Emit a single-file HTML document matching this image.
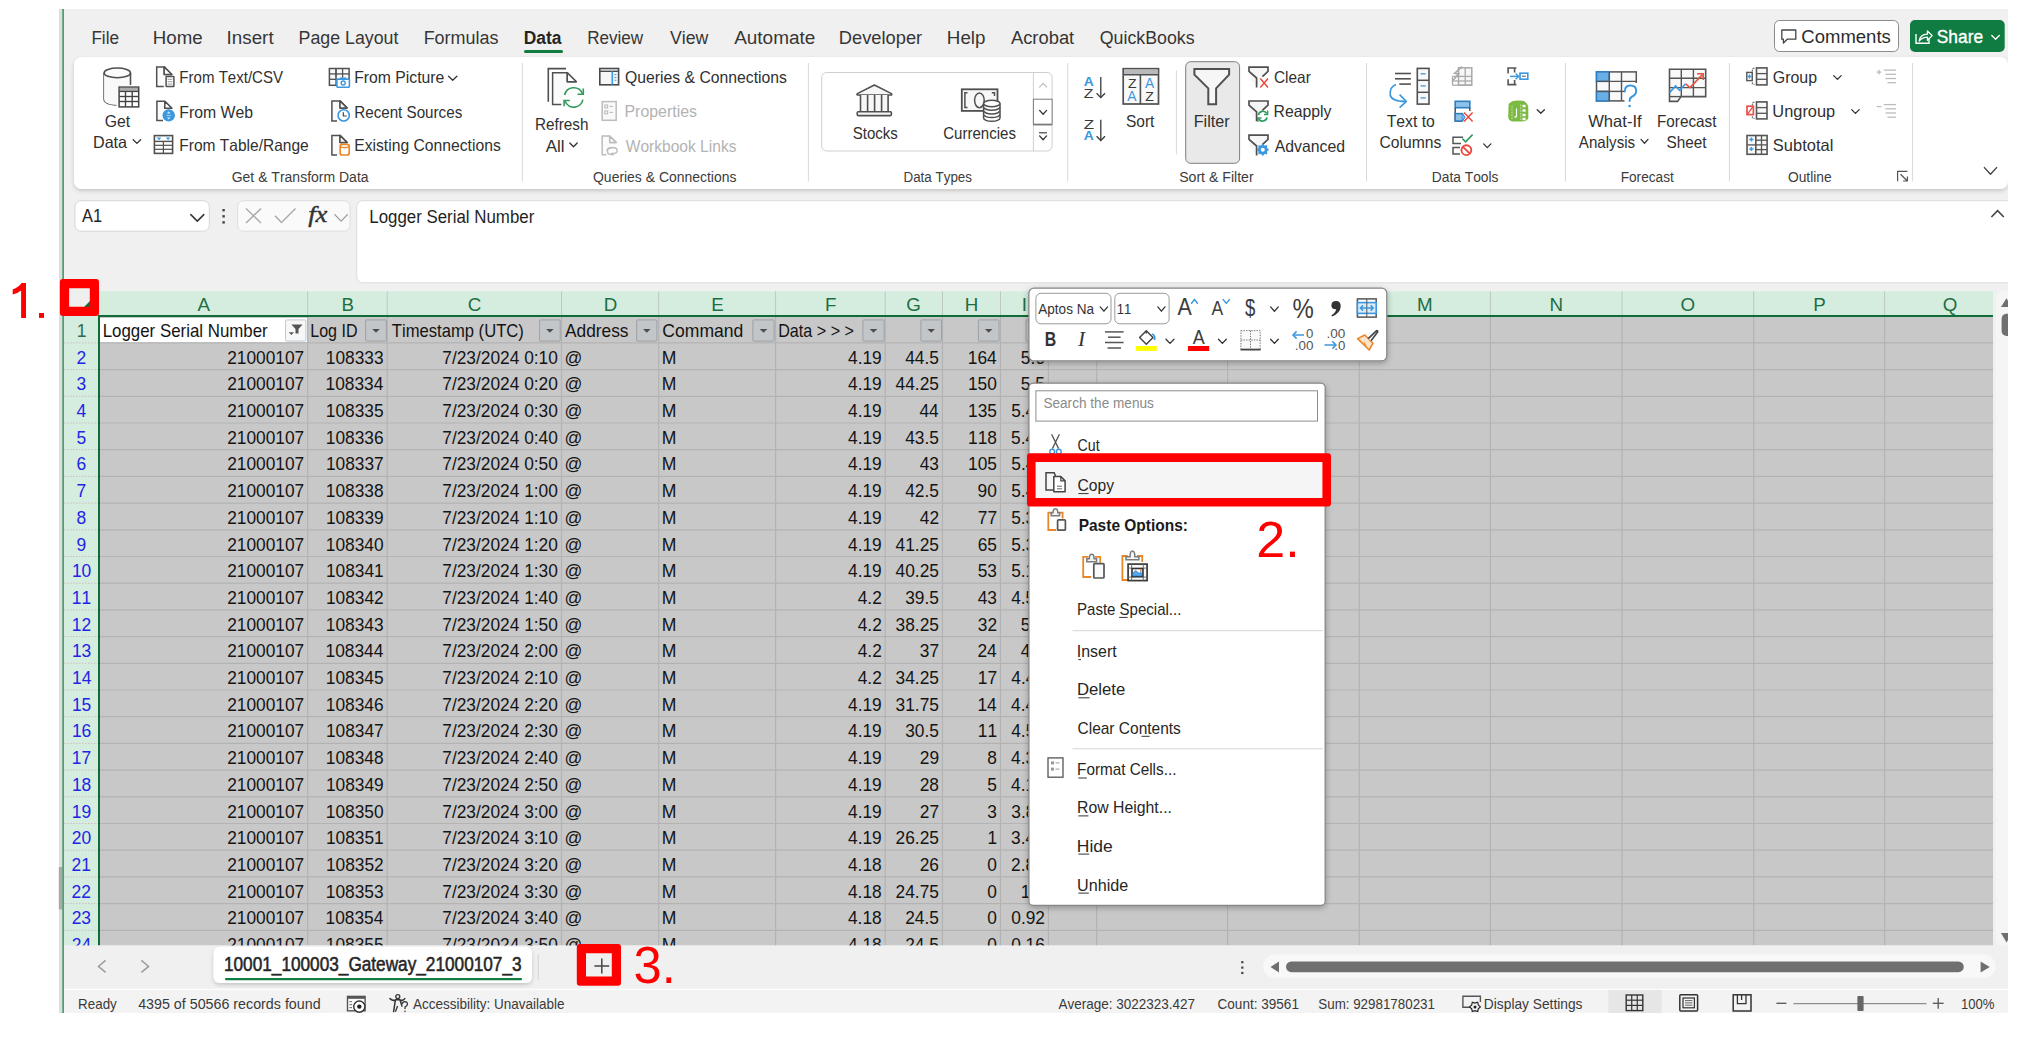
<!DOCTYPE html>
<html><head><meta charset="utf-8"><title>Excel</title>
<style>
html,body{margin:0;padding:0;background:#ffffff;overflow:hidden;width:2036px;height:1037px}
svg{display:block;position:absolute;left:0;top:0}
text{font-family:"Liberation Sans",sans-serif;font-kerning:none;font-variant-ligatures:none;white-space:pre}
</style></head><body>
<svg width="2036" height="1037" viewBox="0 0 2036 1037">
<defs>
<filter id="sh" x="-10%" y="-10%" width="120%" height="130%"><feGaussianBlur in="SourceAlpha" stdDeviation="3"/><feOffset dy="2"/><feComponentTransfer><feFuncA type="linear" slope="0.28"/></feComponentTransfer><feMerge><feMergeNode/><feMergeNode in="SourceGraphic"/></feMerge></filter>
<filter id="sh2" x="-5%" y="-5%" width="110%" height="130%"><feGaussianBlur in="SourceAlpha" stdDeviation="2"/><feOffset dy="2"/><feComponentTransfer><feFuncA type="linear" slope="0.18"/></feComponentTransfer><feMerge><feMergeNode/><feMergeNode in="SourceGraphic"/></feMerge></filter>
<clipPath id="win"><rect x="64" y="9" width="1944" height="1004"/></clipPath>
</defs>
<rect x="59" y="9" width="3.2" height="1004" fill="#dedede"/>
<rect x="58.8" y="867" width="3.6" height="42.4" fill="#a9a9a9"/>
<rect x="62.2" y="9" width="1.8" height="1004" fill="#4f9f72"/>
<rect x="64" y="9" width="1944" height="1004" fill="#f0f0f0"/>
<g clip-path="url(#win)">
<text x="91.39" y="43.8" textLength="27.67" lengthAdjust="spacingAndGlyphs" style="font-size:19.19px" fill="#363636">File</text>
<text x="152.77" y="43.8" textLength="49.86" lengthAdjust="spacingAndGlyphs" style="font-size:19.19px" fill="#363636">Home</text>
<text x="226.56" y="43.8" textLength="47.07" lengthAdjust="spacingAndGlyphs" style="font-size:19.19px" fill="#363636">Insert</text>
<text x="298.54" y="43.8" textLength="99.89" lengthAdjust="spacingAndGlyphs" style="font-size:19.19px" fill="#363636">Page Layout</text>
<text x="423.63" y="43.8" textLength="74.82" lengthAdjust="spacingAndGlyphs" style="font-size:19.19px" fill="#363636">Formulas</text>
<text x="587.2" y="43.8" textLength="55.96" lengthAdjust="spacingAndGlyphs" style="font-size:19.19px" fill="#363636">Review</text>
<text x="670.02" y="43.8" textLength="38.33" lengthAdjust="spacingAndGlyphs" style="font-size:19.19px" fill="#363636">View</text>
<text x="734.16" y="43.8" textLength="81.18" lengthAdjust="spacingAndGlyphs" style="font-size:19.19px" fill="#363636">Automate</text>
<text x="838.8" y="43.8" textLength="83.4" lengthAdjust="spacingAndGlyphs" style="font-size:19.19px" fill="#363636">Developer</text>
<text x="946.86" y="43.8" textLength="38.63" lengthAdjust="spacingAndGlyphs" style="font-size:19.19px" fill="#363636">Help</text>
<text x="1010.96" y="43.8" textLength="63.27" lengthAdjust="spacingAndGlyphs" style="font-size:19.19px" fill="#363636">Acrobat</text>
<text x="1099.76" y="43.8" textLength="94.88" lengthAdjust="spacingAndGlyphs" style="font-size:19.19px" fill="#363636">QuickBooks</text>
<text x="523.63" y="43.8" textLength="37.75" lengthAdjust="spacingAndGlyphs" style="font-size:19.19px;font-weight:bold" fill="#242424">Data</text>
<rect x="524" y="50" width="39" height="3" rx="1.5" fill="#107c41"/>
<rect x="1774.5" y="20.5" width="124" height="31" rx="5" fill="#ffffff" stroke="#8a8a8a" stroke-width="1"/>
<text x="1801.36" y="42.5" textLength="89.41" lengthAdjust="spacingAndGlyphs" style="font-size:18.17px" fill="#2b2b2b">Comments</text>
<rect x="1910" y="20" width="94.7" height="32" rx="5" fill="#107c41"/>
<text x="1936.81" y="42.5" textLength="46.26" lengthAdjust="spacingAndGlyphs" style="font-size:18.17px" fill="#ffffff" stroke="#ffffff" stroke-width="0.35">Share</text>
<rect x="74" y="57" width="1934" height="132" rx="8" fill="#ffffff" filter="url(#sh2)"/>
<rect x="821.7" y="72.5" width="230.4" height="78.5" rx="5" fill="#ffffff" stroke="#cfcfcf" stroke-width="1"/>
<rect x="1185.7" y="61.7" width="53.9" height="101.6" rx="5" fill="#e9e9e9" stroke="#7d7d7d" stroke-width="1"/>
<line x1="522.3" y1="63" x2="522.3" y2="181.5" stroke="#d9d9d9" stroke-width="1"/>
<line x1="808.4" y1="63" x2="808.4" y2="181.5" stroke="#d9d9d9" stroke-width="1"/>
<line x1="1067.7" y1="63" x2="1067.7" y2="181.5" stroke="#d9d9d9" stroke-width="1"/>
<line x1="1366.5" y1="63" x2="1366.5" y2="181.5" stroke="#d9d9d9" stroke-width="1"/>
<line x1="1565.5" y1="63" x2="1565.5" y2="181.5" stroke="#d9d9d9" stroke-width="1"/>
<line x1="1729.4" y1="63" x2="1729.4" y2="181.5" stroke="#d9d9d9" stroke-width="1"/>
<line x1="1912.6" y1="63" x2="1912.6" y2="181.5" stroke="#d9d9d9" stroke-width="1"/>
<line x1="1176.4" y1="70.5" x2="1176.4" y2="154.5" stroke="#d9d9d9" stroke-width="1"/>
<text x="231.7" y="181.5" textLength="136.9" lengthAdjust="spacingAndGlyphs" style="font-size:13.95px" fill="#3c3c3c">Get &amp; Transform Data</text>
<text x="593.04" y="181.5" textLength="143.36" lengthAdjust="spacingAndGlyphs" style="font-size:13.95px" fill="#3c3c3c">Queries &amp; Connections</text>
<text x="903.5" y="181.5" textLength="68.48" lengthAdjust="spacingAndGlyphs" style="font-size:13.95px" fill="#3c3c3c">Data Types</text>
<text x="1179.16" y="181.5" textLength="74.47" lengthAdjust="spacingAndGlyphs" style="font-size:13.95px" fill="#3c3c3c">Sort &amp; Filter</text>
<text x="1431.77" y="181.5" textLength="66.73" lengthAdjust="spacingAndGlyphs" style="font-size:13.95px" fill="#3c3c3c">Data Tools</text>
<text x="1620.68" y="181.5" textLength="53.12" lengthAdjust="spacingAndGlyphs" style="font-size:13.95px" fill="#3c3c3c">Forecast</text>
<text x="1787.95" y="181.5" textLength="43.67" lengthAdjust="spacingAndGlyphs" style="font-size:13.95px" fill="#3c3c3c">Outline</text>
<text x="104.71" y="126.6" textLength="25.41" lengthAdjust="spacingAndGlyphs" style="font-size:16.28px" fill="#303030">Get</text>
<text x="92.97" y="147.9" textLength="34.13" lengthAdjust="spacingAndGlyphs" style="font-size:16.28px" fill="#303030">Data</text>
<text x="179.37" y="83.3" textLength="103.7" lengthAdjust="spacingAndGlyphs" style="font-size:16.28px" fill="#303030">From Text/CSV</text>
<text x="179.3" y="117.6" textLength="73.76" lengthAdjust="spacingAndGlyphs" style="font-size:16.28px" fill="#303030">From Web</text>
<text x="179.33" y="151" textLength="129.36" lengthAdjust="spacingAndGlyphs" style="font-size:16.28px" fill="#303030">From Table/Range</text>
<text x="354.21" y="83.3" textLength="90.09" lengthAdjust="spacingAndGlyphs" style="font-size:16.28px" fill="#303030">From Picture</text>
<text x="354.25" y="117.6" textLength="107.99" lengthAdjust="spacingAndGlyphs" style="font-size:16.28px" fill="#303030">Recent Sources</text>
<text x="354.21" y="151" textLength="146.55" lengthAdjust="spacingAndGlyphs" style="font-size:16.28px" fill="#303030">Existing Connections</text>
<text x="534.95" y="129.8" textLength="53.55" lengthAdjust="spacingAndGlyphs" style="font-size:16.28px" fill="#303030">Refresh</text>
<text x="545.77" y="151.5" textLength="18.87" lengthAdjust="spacingAndGlyphs" style="font-size:16.28px" fill="#303030">All</text>
<text x="625.05" y="83" textLength="161.91" lengthAdjust="spacingAndGlyphs" style="font-size:16.28px" fill="#303030">Queries &amp; Connections</text>
<text x="624.49" y="117" textLength="72.58" lengthAdjust="spacingAndGlyphs" style="font-size:16.28px" fill="#b3b3b3">Properties</text>
<text x="625.73" y="151.5" textLength="110.73" lengthAdjust="spacingAndGlyphs" style="font-size:16.28px" fill="#b3b3b3">Workbook Links</text>
<text x="852.72" y="139" textLength="45.13" lengthAdjust="spacingAndGlyphs" style="font-size:16.28px" fill="#303030">Stocks</text>
<text x="943.24" y="139" textLength="72.71" lengthAdjust="spacingAndGlyphs" style="font-size:16.28px" fill="#303030">Currencies</text>
<text x="1126" y="126.9" textLength="28.42" lengthAdjust="spacingAndGlyphs" style="font-size:16.28px" fill="#303030">Sort</text>
<text x="1193.67" y="126.9" textLength="36" lengthAdjust="spacingAndGlyphs" style="font-size:16.28px" fill="#303030">Filter</text>
<text x="1274.02" y="83" textLength="36.74" lengthAdjust="spacingAndGlyphs" style="font-size:16.28px" fill="#303030">Clear</text>
<text x="1273.5" y="116.9" textLength="58.03" lengthAdjust="spacingAndGlyphs" style="font-size:16.28px" fill="#303030">Reapply</text>
<text x="1274.77" y="151.5" textLength="70.25" lengthAdjust="spacingAndGlyphs" style="font-size:16.28px" fill="#303030">Advanced</text>
<text x="1386.65" y="126.5" textLength="48.22" lengthAdjust="spacingAndGlyphs" style="font-size:16.28px" fill="#303030">Text to</text>
<text x="1379.4" y="147.9" textLength="61.86" lengthAdjust="spacingAndGlyphs" style="font-size:16.28px" fill="#303030">Columns</text>
<text x="1588.23" y="126.5" textLength="53.45" lengthAdjust="spacingAndGlyphs" style="font-size:16.28px" fill="#303030">What-If</text>
<text x="1578.87" y="147.9" textLength="56.28" lengthAdjust="spacingAndGlyphs" style="font-size:16.28px" fill="#303030">Analysis</text>
<text x="1657.05" y="126.5" textLength="59.36" lengthAdjust="spacingAndGlyphs" style="font-size:16.28px" fill="#303030">Forecast</text>
<text x="1666.6" y="147.9" textLength="40.01" lengthAdjust="spacingAndGlyphs" style="font-size:16.28px" fill="#303030">Sheet</text>
<text x="1772.8" y="82.8" textLength="44.27" lengthAdjust="spacingAndGlyphs" style="font-size:16.28px" fill="#303030">Group</text>
<text x="1772.34" y="116.6" textLength="62.85" lengthAdjust="spacingAndGlyphs" style="font-size:16.28px" fill="#303030">Ungroup</text>
<text x="1772.85" y="151.2" textLength="60.45" lengthAdjust="spacingAndGlyphs" style="font-size:16.28px" fill="#303030">Subtotal</text>
<path d="M104.1 73 L104.1 99 Q104.1 104.3 116.6 105" fill="none" stroke="#505050" stroke-width="1.6"/>
<path d="M104.1 73 L104.1 99 Q104.1 104.5 117.5 104.9 L118.3 86.3 L130.5 86.3 L130.5 73 Z" fill="#f9f9f9"/>
<ellipse cx="117.3" cy="72.9" rx="13.2" ry="4.9" fill="#fbfbfb" stroke="#505050" stroke-width="1.6"/>
<line x1="130.5" y1="73" x2="130.5" y2="85" stroke="#505050" stroke-width="1.6"/>
<rect x="119.1" y="87.1" width="19.6" height="19.8" fill="#ffffff" stroke="#444444" stroke-width="1.5"/>
<rect x="119.8" y="87.8" width="18.2" height="2.9" fill="#ababab"/>
<line x1="119.1" y1="91.4" x2="138.7" y2="91.4" stroke="#444444" stroke-width="1.4"/>
<line x1="119.1" y1="96.5" x2="138.7" y2="96.5" stroke="#444444" stroke-width="1.4"/>
<line x1="119.1" y1="101.5" x2="138.7" y2="101.5" stroke="#444444" stroke-width="1.4"/>
<line x1="125.5" y1="91.4" x2="125.5" y2="106.9" stroke="#444444" stroke-width="1.4"/>
<line x1="132.2" y1="91.4" x2="132.2" y2="106.9" stroke="#444444" stroke-width="1.4"/>
<path d="M133.2 139.8 L136.9 143.4 L140.6 139.8" fill="none" stroke="#333333" stroke-width="1.3" stroke-linecap="round" stroke-linejoin="round"/>
<path d="M156.7 66.9 L164.2 66.9 L171.8 74.5 L171.8 86.6 L156.7 86.6 Z" fill="#fbfbfb"/>
<path d="M163.8 86.6 L156.7 86.6 L156.7 66.9 L164.2 66.9" fill="none" stroke="#505050" stroke-width="1.5"/>
<path d="M164.2 66.9 L164.2 74.5 L171.8 74.5 L164.2 66.9" fill="none" stroke="#505050" stroke-width="1.5" stroke-linejoin="round"/>
<path d="M164.2 66.9 L164.2 74.5 L171.8 74.5 Z" fill="#ffffff" stroke="#505050" stroke-width="1.5" stroke-linejoin="round"/>
<rect x="166.1" y="76.5" width="7.8" height="10.1" rx="0.5" fill="#ffffff" stroke="#505050" stroke-width="1.5"/>
<line x1="167.6" y1="79.3" x2="172.4" y2="79.3" stroke="#9a9a9a" stroke-width="1"/>
<line x1="167.6" y1="81.7" x2="172.4" y2="81.7" stroke="#9a9a9a" stroke-width="1"/>
<line x1="167.6" y1="84.1" x2="172.4" y2="84.1" stroke="#9a9a9a" stroke-width="1"/>
<path d="M156.9 101.3 L164.8 101.3 L171.8 108.3 L171.8 120.6 L156.9 120.6 Z" fill="#fbfbfb"/>
<path d="M163 120.6 L156.9 120.6 L156.9 101.3 L164.8 101.3" fill="none" stroke="#505050" stroke-width="1.5"/>
<path d="M164.8 101.3 L164.8 108.3 L171.8 108.3 L164.8 101.3" fill="none" stroke="#505050" stroke-width="1.5" stroke-linejoin="round"/>
<path d="M164.8 101.3 L164.8 108.3 L171.8 108.3 Z" fill="#ffffff" stroke="#505050" stroke-width="1.5" stroke-linejoin="round"/>
<circle cx="168.7" cy="115.4" r="6.2" fill="#3b97de"/>
<path d="M166.9 113.4 L168.7 111.3 L170.5 113.4 Z M166.9 117.4 L168.7 119.5 L170.5 117.4 Z" fill="#ffffff" opacity="0.8"/>
<line x1="166.5" y1="115.4" x2="170.9" y2="115.4" stroke="#ffffff" stroke-width="0.8" opacity="0.7"/>
<rect x="154.4" y="135.6" width="18.2" height="17.8" fill="#ffffff" stroke="#505050" stroke-width="1.6"/>
<line x1="154.4" y1="141.4" x2="172.6" y2="141.4" stroke="#505050" stroke-width="1.4"/>
<line x1="154.4" y1="145.3" x2="172.6" y2="145.3" stroke="#505050" stroke-width="1.2"/>
<line x1="154.4" y1="149.3" x2="172.6" y2="149.3" stroke="#505050" stroke-width="1.2"/>
<line x1="163.4" y1="141.4" x2="163.4" y2="153.4" stroke="#505050" stroke-width="1.2"/>
<path d="M156.7 137.6 L161.3 137.6 L159 140.3 Z M165.8 137.6 L170.4 137.6 L168.1 140.3 Z" fill="#3b97de"/>
<rect x="329.4" y="68.5" width="19.7" height="16.8" fill="#fbfbfb" stroke="#505050" stroke-width="1.5"/>
<line x1="329.4" y1="73.9" x2="349.1" y2="73.9" stroke="#505050" stroke-width="1.3"/>
<line x1="329.4" y1="79.3" x2="349.1" y2="79.3" stroke="#505050" stroke-width="1.3"/>
<line x1="336" y1="68.5" x2="336" y2="77.6" stroke="#505050" stroke-width="1.3"/>
<line x1="342.6" y1="68.5" x2="342.6" y2="77.6" stroke="#505050" stroke-width="1.3"/>
<line x1="336" y1="68.5" x2="336" y2="85.3" stroke="#505050" stroke-width="1.3"/>
<rect x="336.9" y="79.2" width="12.5" height="8" rx="0.6" fill="#ffffff" stroke="#3b97de" stroke-width="1.6"/>
<rect x="340" y="77.4" width="6.2" height="2" fill="#3b97de"/>
<circle cx="343.2" cy="83" r="2" fill="none" stroke="#3b97de" stroke-width="1.4"/>
<path d="M448.5 76.3 L452.7 80.2 L456.9 76.3" fill="none" stroke="#333333" stroke-width="1.3" stroke-linecap="round" stroke-linejoin="round"/>
<path d="M331.9 100.9 L340 100.9 L347 107.9 L347 121 L331.9 121 Z" fill="#fbfbfb"/>
<path d="M337 121 L331.9 121 L331.9 100.9 L340 100.9" fill="none" stroke="#505050" stroke-width="1.5"/>
<path d="M340 100.9 L340 107.9 L347 107.9 L340 100.9" fill="none" stroke="#505050" stroke-width="1.5" stroke-linejoin="round"/>
<path d="M340 100.9 L340 107.9 L347 107.9 Z" fill="#ffffff" stroke="#505050" stroke-width="1.5" stroke-linejoin="round"/>
<circle cx="343.7" cy="115.4" r="5.6" fill="#ffffff" stroke="#3b97de" stroke-width="1.6"/>
<path d="M343.3 112.2 L343.3 116 L346.6 116" fill="none" stroke="#444444" stroke-width="1.2"/>
<path d="M331.9 135.4 L340 135.4 L347 142.4 L347 155 L331.9 155 Z" fill="#fbfbfb"/>
<path d="M337 155 L331.9 155 L331.9 135.4 L340 135.4" fill="none" stroke="#505050" stroke-width="1.5"/>
<path d="M340 135.4 L340 142.4 L347 142.4 L340 135.4" fill="none" stroke="#505050" stroke-width="1.5" stroke-linejoin="round"/>
<path d="M340 135.4 L340 142.4 L347 142.4 Z" fill="#ffffff" stroke="#505050" stroke-width="1.5" stroke-linejoin="round"/>
<rect x="340.2" y="144.4" width="9" height="10.6" rx="2" fill="#ffffff" stroke="#e8862a" stroke-width="1.7"/>
<path d="M340.2 146.5 Q344.7 149 349.2 146.5" fill="none" stroke="#e8862a" stroke-width="1.4"/>
<path d="M548.3 101.7 L548.3 68.6 L566 68.6" fill="none" stroke="#505050" stroke-width="1.6"/>
<path d="M552.6 72.8 L567.3 72.8 L576.3 81.8 L576.3 104.5 L552.6 104.5 Z" fill="#fbfbfb"/>
<path d="M561.3 104.5 L552.6 104.5 L552.6 72.8 L567.3 72.8" fill="none" stroke="#505050" stroke-width="1.5"/>
<path d="M567.3 72.8 L567.3 81.8 L576.3 81.8 L567.3 72.8" fill="none" stroke="#505050" stroke-width="1.5" stroke-linejoin="round"/>
<path d="M567.3 72.8 L567.3 81.8 L576.3 81.8 Z" fill="#ffffff" stroke="#505050" stroke-width="1.5" stroke-linejoin="round"/>
<circle cx="573.7" cy="97.4" r="10.5" fill="#ffffff"/>
<path d="M564.6 95 A9.3 9.3 0 0 1 582.3 93.5" fill="none" stroke="#2e9a5c" stroke-width="1.6"/>
<path d="M582.9 99.6 A9.3 9.3 0 0 1 565.1 101.3" fill="none" stroke="#2e9a5c" stroke-width="1.6"/>
<path d="M583.3 88.5 L583.3 94.2 L577.6 94.2" fill="none" stroke="#2e9a5c" stroke-width="1.6"/>
<path d="M564.1 106.2 L564.1 100.5 L569.8 100.5" fill="none" stroke="#2e9a5c" stroke-width="1.6"/>
<path d="M569.8 143 L573.5 146.8 L577.2 143" fill="none" stroke="#333333" stroke-width="1.3" stroke-linecap="round" stroke-linejoin="round"/>
<rect x="599.8" y="68.5" width="18.8" height="16.3" fill="#f7f7f7" stroke="#4a4a4a" stroke-width="1.6"/>
<line x1="599.8" y1="71.3" x2="618.6" y2="71.3" stroke="#4a4a4a" stroke-width="1.4"/>
<line x1="612.3" y1="71.3" x2="612.3" y2="84.8" stroke="#3b97de" stroke-width="1.6"/>
<line x1="614.4" y1="74.6" x2="616.4" y2="74.6" stroke="#3b97de" stroke-width="1"/>
<line x1="614.4" y1="77.4" x2="616.4" y2="77.4" stroke="#3b97de" stroke-width="1"/>
<line x1="614.4" y1="80.2" x2="616.4" y2="80.2" stroke="#3b97de" stroke-width="1"/>
<rect x="602.2" y="101.6" width="14" height="18.7" fill="#f9f9f9" stroke="#bdbdbd" stroke-width="1.5"/>
<rect x="604.8" y="105" width="2.8" height="2.8" fill="none" stroke="#bdbdbd" stroke-width="1.1"/>
<rect x="604.8" y="111" width="2.8" height="2.8" fill="none" stroke="#bdbdbd" stroke-width="1.1"/>
<line x1="609.5" y1="106.4" x2="613" y2="106.4" stroke="#bdbdbd" stroke-width="1.1"/>
<line x1="609.5" y1="112.4" x2="613" y2="112.4" stroke="#bdbdbd" stroke-width="1.1"/>
<path d="M602.2 136.1 L609.7 136.1 L616.2 142.6 L616.2 154.8 L602.2 154.8 Z" fill="#fbfbfb"/>
<path d="M606.5 154.8 L602.2 154.8 L602.2 136.1 L609.7 136.1" fill="none" stroke="#bdbdbd" stroke-width="1.5"/>
<path d="M609.7 136.1 L609.7 142.6 L616.2 142.6 L609.7 136.1" fill="none" stroke="#bdbdbd" stroke-width="1.5" stroke-linejoin="round"/>
<path d="M609.7 136.1 L609.7 142.6 L616.2 142.6 Z" fill="#ffffff" stroke="#bdbdbd" stroke-width="1.5" stroke-linejoin="round"/>
<path d="M607 151 Q607 147.8 611.5 147.8 L613.8 147.8 Q617.2 147.8 617.2 150.6 Q617.2 153.4 613.8 153.4 L611 153.4" fill="#ffffff" stroke="#bdbdbd" stroke-width="1.4"/>
<path d="M611 148 Q607.5 148.2 607.5 151.2 Q607.5 154.6 611.5 154.6 L614 154.6" fill="none" stroke="#bdbdbd" stroke-width="1.4"/>
<line x1="1033.4" y1="72.5" x2="1033.4" y2="151" stroke="#cfcfcf" stroke-width="1"/>
<rect x="1033.4" y="99.2" width="18.7" height="25" fill="#ffffff" stroke="#7a7a7a" stroke-width="1"/>
<line x1="1033.4" y1="124.7" x2="1052.1" y2="124.7" stroke="#7a7a7a" stroke-width="1.5"/>
<path d="M1039.6 87 L1043.1 83.3 L1046.6 87" fill="none" stroke="#c4c4c4" stroke-width="1.2" stroke-linecap="round" stroke-linejoin="round"/>
<path d="M1039.6 110.4 L1043.1 114.2 L1046.6 110.4" fill="none" stroke="#333333" stroke-width="1.3" stroke-linecap="round" stroke-linejoin="round"/>
<line x1="1039" y1="132.8" x2="1047" y2="132.8" stroke="#444" stroke-width="1.2"/>
<path d="M1039.6 135.9 L1043.1 139.7 L1046.6 135.9" fill="none" stroke="#333333" stroke-width="1.3" stroke-linecap="round" stroke-linejoin="round"/>
<path d="M874.4 85 L891.5 93.6 Q892.2 95 891 95 L857.6 95 Q856.5 95 857.3 93.6 Z" fill="#f6f6f6" stroke="#505050" stroke-width="1.6" stroke-linejoin="round"/>
<rect x="860.5" y="95" width="27.6" height="16.7" fill="#f6f6f6"/>
<line x1="860.5" y1="95" x2="860.5" y2="111.7" stroke="#505050" stroke-width="1.6"/>
<line x1="867.6" y1="95" x2="867.6" y2="111.7" stroke="#505050" stroke-width="1.6"/>
<line x1="874.6" y1="95" x2="874.6" y2="111.7" stroke="#505050" stroke-width="1.6"/>
<line x1="881.6" y1="95" x2="881.6" y2="111.7" stroke="#505050" stroke-width="1.6"/>
<line x1="888.1" y1="95" x2="888.1" y2="111.7" stroke="#505050" stroke-width="1.6"/>
<rect x="857.2" y="111.8" width="34.2" height="3.8" rx="1" fill="#f6f6f6" stroke="#505050" stroke-width="1.6"/>
<rect x="961.8" y="89.3" width="35.7" height="21.6" fill="#f7f7f7" stroke="#505050" stroke-width="1.8"/>
<path d="M967.5 92.8 L964.9 92.8 L964.9 107.4 L967.5 107.4 M991.8 92.8 L994.5 92.8 L994.5 96" fill="none" stroke="#505050" stroke-width="1.5"/>
<ellipse cx="979.4" cy="100.3" rx="4.8" ry="7.4" fill="none" stroke="#505050" stroke-width="1.5"/>
<path d="M983.6 114.6 L983.6 118 A8.2 3.3 0 0 0 1000 118 L1000 114.6" fill="#ffffff" stroke="#505050" stroke-width="1.5"/>
<path d="M983.6 110.9 L983.6 114.3 A8.2 3.3 0 0 0 1000 114.3 L1000 110.9" fill="#ffffff" stroke="#505050" stroke-width="1.5"/>
<path d="M983.6 107.2 L983.6 110.6 A8.2 3.3 0 0 0 1000 110.6 L1000 107.2" fill="#ffffff" stroke="#505050" stroke-width="1.5"/>
<path d="M983.6 103.5 L983.6 106.9 A8.2 3.3 0 0 0 1000 106.9 L1000 103.5" fill="#ffffff" stroke="#505050" stroke-width="1.5"/>
<ellipse cx="991.8" cy="103.5" rx="8.2" ry="3.2" fill="#ffffff" stroke="#505050" stroke-width="1.5"/>
<text x="1083.85" y="86.2" textLength="10.01" lengthAdjust="spacingAndGlyphs" style="font-size:13.23px;font-weight:bold" fill="#3b97de">A</text>
<text x="1083.7" y="97.7" textLength="9.59" lengthAdjust="spacingAndGlyphs" style="font-size:12.5px" fill="#3a3a3a">Z</text>
<text x="1083.66" y="128.8" textLength="10.37" lengthAdjust="spacingAndGlyphs" style="font-size:13.23px" fill="#3a3a3a">Z</text>
<text x="1083.85" y="140.3" textLength="10.01" lengthAdjust="spacingAndGlyphs" style="font-size:12.5px;font-weight:bold" fill="#3b97de">A</text>
<line x1="1100.8" y1="77.1" x2="1100.8" y2="97.6" stroke="#3a3a3a" stroke-width="1.3"/>
<path d="M1096.6 93.3 L1100.8 97.6 L1105 93.3" fill="none" stroke="#3a3a3a" stroke-width="1.3"/>
<line x1="1100.8" y1="119.7" x2="1100.8" y2="140.5" stroke="#3a3a3a" stroke-width="1.3"/>
<path d="M1096.6 136.2 L1100.8 140.5 L1105 136.2" fill="none" stroke="#3a3a3a" stroke-width="1.3"/>
<rect x="1123.2" y="68.7" width="35.3" height="35.3" fill="#f9f9f9" stroke="#505050" stroke-width="1.7"/>
<rect x="1124" y="69.5" width="33.7" height="5" fill="#b9b9b9"/>
<line x1="1123.2" y1="74.8" x2="1158.5" y2="74.8" stroke="#505050" stroke-width="1.4"/>
<line x1="1140.4" y1="74.8" x2="1140.4" y2="104" stroke="#505050" stroke-width="1.6"/>
<text x="1128.05" y="87.8" textLength="8.59" lengthAdjust="spacingAndGlyphs" style="font-size:13.52px" fill="#3a3a3a">Z</text>
<text x="1127.37" y="100.9" textLength="9.25" lengthAdjust="spacingAndGlyphs" style="font-size:14.24px" fill="#3b97de">A</text>
<text x="1145.07" y="87.8" textLength="9.15" lengthAdjust="spacingAndGlyphs" style="font-size:14.24px" fill="#3b97de">A</text>
<text x="1145.35" y="100.9" textLength="8.59" lengthAdjust="spacingAndGlyphs" style="font-size:13.52px" fill="#3a3a3a">Z</text>
<path d="M1194.4 69 L1229.1 69 L1229.1 74.6 L1216.1 88.4 L1216.1 104.2 L1208.3 104.2 L1208.3 88.4 L1194.4 74.6 Z" fill="#f6f6f6" stroke="#505050" stroke-width="2" stroke-linejoin="miter"/>
<path d="M1256.6 87.5 L1249 77.8 L1249 67.2 L1268 67.2 L1268 71.4 L1262 76.8" fill="#f6f6f6"/>
<path d="M1256.6 87.5 L1256.6 78 L1249 71.4 L1249 67.2 L1268 67.2 L1268 71.4 L1262.4 76.6" fill="none" stroke="#505050" stroke-width="1.7" stroke-linejoin="miter"/>
<path d="M1256.6 121.3 L1249 111.6 L1249 101 L1268 101 L1268 105.2 L1262 110.6" fill="#f6f6f6"/>
<path d="M1256.6 121.3 L1256.6 111.8 L1249 105.2 L1249 101 L1268 101 L1268 105.2 L1262.4 110.4" fill="none" stroke="#505050" stroke-width="1.7" stroke-linejoin="miter"/>
<path d="M1256.6 155.5 L1249 145.8 L1249 135.2 L1268 135.2 L1268 139.4 L1262 144.8" fill="#f6f6f6"/>
<path d="M1256.6 155.5 L1256.6 146 L1249 139.4 L1249 135.2 L1268 135.2 L1268 139.4 L1262.4 144.6" fill="none" stroke="#505050" stroke-width="1.7" stroke-linejoin="miter"/>
<path d="M1260.3 78.6 L1268 87.6 M1268 78.6 L1260.3 87.6" fill="none" stroke="#ea4a3d" stroke-width="1.5"/>
<path d="M1258.4 115 A4.6 4.6 0 0 1 1266.8 113.4" fill="none" stroke="#2e9a5c" stroke-width="1.6"/>
<path d="M1267 117.3 A4.6 4.6 0 0 1 1258.6 119" fill="none" stroke="#2e9a5c" stroke-width="1.6"/>
<path d="M1267.6 110.6 L1267.6 114.4 L1264 114.4" fill="none" stroke="#2e9a5c" stroke-width="1.5"/>
<path d="M1257.8 121.8 L1257.8 118 L1261.4 118" fill="none" stroke="#2e9a5c" stroke-width="1.5"/>
<path d="M1269.1 149.7 L1267.05 151.46 L1267.25 154.15 L1264.56 153.95 L1262.8 156 L1261.04 153.95 L1258.35 154.15 L1258.55 151.46 L1256.5 149.7 L1258.55 147.94 L1258.35 145.25 L1261.04 145.45 L1262.8 143.4 L1264.56 145.45 L1267.25 145.25 L1267.05 147.94 Z" fill="#3b97de"/>
<circle cx="1262.8" cy="149.7" r="2" fill="#ffffff"/>
<line x1="1395" y1="73.5" x2="1410.9" y2="73.5" stroke="#505050" stroke-width="1.6"/>
<line x1="1395" y1="78.8" x2="1410.9" y2="78.8" stroke="#505050" stroke-width="1.6"/>
<line x1="1399.3" y1="84.1" x2="1410.9" y2="84.1" stroke="#505050" stroke-width="1.6"/>
<rect x="1417.3" y="68.4" width="11.7" height="35.7" fill="#f9f9f9" stroke="#505050" stroke-width="1.6"/>
<line x1="1417.3" y1="80.3" x2="1429" y2="80.3" stroke="#505050" stroke-width="1.5"/>
<line x1="1417.3" y1="92.3" x2="1429" y2="92.3" stroke="#505050" stroke-width="1.5"/>
<line x1="1420.6" y1="73.8" x2="1425.7" y2="73.8" stroke="#3b97de" stroke-width="1.3"/>
<line x1="1420.6" y1="85.9" x2="1425.7" y2="85.9" stroke="#3b97de" stroke-width="1.3"/>
<line x1="1420.6" y1="97.9" x2="1425.7" y2="97.9" stroke="#3b97de" stroke-width="1.3"/>
<path d="M1396 84.6 Q1389.5 87 1390.2 95 Q1391.5 101.5 1405.5 101.4" fill="none" stroke="#3b97de" stroke-width="1.6"/>
<path d="M1399.6 94.6 L1406.3 101.4 L1399.6 107.6" fill="none" stroke="#3b97de" stroke-width="1.6"/>
<rect x="1458.5" y="67.8" width="13.3" height="17.4" fill="#f7f7f7" stroke="#a9a9a9" stroke-width="1.5"/>
<line x1="1452.5" y1="76.4" x2="1471.8" y2="76.4" stroke="#a9a9a9" stroke-width="1.3"/>
<line x1="1452.5" y1="81" x2="1471.8" y2="81" stroke="#a9a9a9" stroke-width="1.3"/>
<line x1="1452.5" y1="85.2" x2="1471.8" y2="85.2" stroke="#a9a9a9" stroke-width="1.3"/>
<line x1="1465.2" y1="67.8" x2="1465.2" y2="85.2" stroke="#a9a9a9" stroke-width="1.3"/>
<line x1="1452.5" y1="76.4" x2="1452.5" y2="85.2" stroke="#a9a9a9" stroke-width="1.3"/>
<path d="M1462 66.6 L1454.6 73.4 L1458.6 73.8 L1453 80.6" fill="none" stroke="#a9a9a9" stroke-width="1.6"/>
<rect x="1455.2" y="101.3" width="14.6" height="6.4" fill="#8cc1ea" stroke="#2f7fc4" stroke-width="1.6"/>
<path d="M1455.2 107.7 L1455.2 121 L1462 121" fill="none" stroke="#444" stroke-width="1.4"/>
<line x1="1469.8" y1="107.7" x2="1469.8" y2="111" stroke="#444" stroke-width="1.4"/>
<rect x="1455.2" y="113.6" width="7.3" height="7.4" fill="#8cc1ea" stroke="#2f7fc4" stroke-width="1.5"/>
<path d="M1462.5 113.6 L1465 117.3 L1462.5 121" fill="#8cc1ea" stroke="#2f7fc4" stroke-width="1"/>
<path d="M1464 112.6 L1472.6 121.4 M1472.6 112.6 L1464 121.4" fill="none" stroke="#ea4a3d" stroke-width="1.5"/>
<path d="M1463 137.2 L1453 137.2 L1453 143.4 L1461 143.4" fill="none" stroke="#555" stroke-width="1.5"/>
<path d="M1460 147.4 L1453 147.4 L1453 154 L1460 154" fill="none" stroke="#555" stroke-width="1.5"/>
<path d="M1462.4 138.6 L1465.6 141.8 L1472.6 134.6" fill="none" stroke="#2e9a5c" stroke-width="1.6"/>
<circle cx="1466.4" cy="150.2" r="4.9" fill="#ffffff" stroke="#ea4a3d" stroke-width="1.9"/>
<line x1="1463" y1="146.8" x2="1469.8" y2="153.6" stroke="#ea4a3d" stroke-width="1.8"/>
<path d="M1483.7 143.9 L1487.3 147.6 L1490.9 143.9" fill="none" stroke="#333333" stroke-width="1.3" stroke-linecap="round" stroke-linejoin="round"/>
<path d="M1516.4 68 L1508.1 68 L1508.1 73.6 M1508.1 79.2 L1508.1 84.6 L1516.4 84.6 M1514.6 68 L1514.6 72.6 M1514.6 80 L1514.6 84.6" fill="none" stroke="#555" stroke-width="1.6"/>
<line x1="1510" y1="76.4" x2="1518.4" y2="76.4" stroke="#3b97de" stroke-width="1.5"/>
<path d="M1515.6 73.6 L1518.6 76.4 L1515.6 79.2" fill="none" stroke="#3b97de" stroke-width="1.4"/>
<rect x="1520" y="73.2" width="7.8" height="6" fill="#ffffff" stroke="#3b97de" stroke-width="1.6"/>
<line x1="1522" y1="76.2" x2="1525.8" y2="76.2" stroke="#555" stroke-width="1"/>
<path d="M1508.6 104 Q1512 100.4 1518 100.6 L1523 100.8 Q1528.2 102.8 1528.3 108 L1528.3 118.6 Q1527 121.4 1522 121.4 L1513 121.6 Q1508.4 120.6 1508.2 117 Z" fill="#7dba44"/>
<path d="M1512 106 L1512 119 M1520.8 104.5 L1520.8 120" fill="none" stroke="#cde6b4" stroke-width="1" stroke-dasharray="1.6 1.2"/>
<rect x="1522.5" y="104.8" width="3.1" height="2.4" fill="#ffffff"/>
<rect x="1522.5" y="109.3" width="3.1" height="2.4" fill="#ffffff"/>
<rect x="1522.5" y="113.8" width="3.1" height="2.4" fill="#ffffff"/>
<rect x="1522.5" y="117.8" width="3.1" height="2.4" fill="#ffffff"/>
<path d="M1516.5 108.5 L1516.5 116.2 Q1516 117.6 1514.4 116.8" fill="none" stroke="#ffffff" stroke-width="1.2"/>
<path d="M1537.2 109.7 L1540.8 113.2 L1544.4 109.7" fill="none" stroke="#333333" stroke-width="1.3" stroke-linecap="round" stroke-linejoin="round"/>
<rect x="1596.5" y="71.9" width="39.8" height="29" fill="#f9f9f9" stroke="#555" stroke-width="1.5"/>
<rect x="1596.5" y="71.9" width="12.8" height="9.5" fill="#6aaee6" stroke="#2f7fc4" stroke-width="1.5"/>
<rect x="1596.5" y="91.4" width="12.8" height="9.5" fill="#6aaee6" stroke="#2f7fc4" stroke-width="1.5"/>
<line x1="1596.5" y1="81.4" x2="1636.3" y2="81.4" stroke="#555" stroke-width="1.4"/>
<line x1="1596.5" y1="91.4" x2="1624" y2="91.4" stroke="#555" stroke-width="1.4"/>
<line x1="1609.3" y1="71.9" x2="1609.3" y2="100.9" stroke="#555" stroke-width="1.4"/>
<line x1="1621.5" y1="71.9" x2="1621.5" y2="100.9" stroke="#555" stroke-width="1.4"/>
<rect x="1624.5" y="83" width="13.5" height="25" fill="#ffffff"/>
<path d="M1624.8 91.6 Q1624.8 85.6 1630.4 85.6 Q1636.2 85.6 1636.2 91 Q1636.2 94.8 1631.5 97 Q1629.6 98 1629.6 101" fill="none" stroke="#3b97de" stroke-width="2" stroke-linecap="round"/>
<circle cx="1629.6" cy="106" r="1.3" fill="#3b97de"/>
<path d="M1669.5 69.2 L1705.7 69.2 L1705.7 96.6 L1681 96.6 L1677.6 101.4 L1669.5 101.4 Z" fill="#f9f9f9" stroke="#555" stroke-width="1.6"/>
<line x1="1669.5" y1="78.2" x2="1705.7" y2="78.2" stroke="#555" stroke-width="1.4"/>
<line x1="1669.5" y1="87.6" x2="1705.7" y2="87.6" stroke="#555" stroke-width="1.4"/>
<line x1="1669.5" y1="96.6" x2="1681" y2="96.6" stroke="#555" stroke-width="1.4"/>
<line x1="1681.3" y1="69.2" x2="1681.3" y2="96.6" stroke="#555" stroke-width="1.4"/>
<line x1="1693.4" y1="69.2" x2="1693.4" y2="96.6" stroke="#555" stroke-width="1.4"/>
<path d="M1669.8 92.4 L1675.6 86 L1679.6 90.4 L1685.6 83.8" fill="none" stroke="#3b97de" stroke-width="1.6"/>
<path d="M1685.6 83.8 L1690 87.6 L1702.4 74.6" fill="none" stroke="#e8533f" stroke-width="1.6"/>
<path d="M1697 73.8 L1703.2 73.8 L1703.2 80" fill="none" stroke="#e8533f" stroke-width="1.6"/>
<path d="M1641 139.4 L1644.5 143.2 L1648 139.4" fill="none" stroke="#333333" stroke-width="1.3" stroke-linecap="round" stroke-linejoin="round"/>
<path d="M1754.5 68.3 L1752.4 68.3 L1752.4 84.3 L1754.5 84.3" fill="none" stroke="#777" stroke-width="1.2" stroke-dasharray="2 1.2"/>
<rect x="1756.5" y="67.9" width="10.5" height="17" fill="#f9f9f9" stroke="#555" stroke-width="1.6"/>
<line x1="1756.5" y1="73.6" x2="1767" y2="73.6" stroke="#555" stroke-width="1.3"/>
<line x1="1756.5" y1="79.3" x2="1767" y2="79.3" stroke="#555" stroke-width="1.3"/>
<rect x="1746.8" y="72.4" width="5.4" height="8.2" fill="#ffffff" stroke="#555" stroke-width="1.4"/>
<path d="M1749.5 74.4 L1749.5 78.6 M1747.6 76.5 L1751.4 76.5" fill="none" stroke="#3b97de" stroke-width="1.4"/>
<path d="M1754.5 102.3 L1752.4 102.3 L1752.4 118.3 L1754.5 118.3" fill="none" stroke="#777" stroke-width="1.2" stroke-dasharray="2 1.2"/>
<rect x="1756.5" y="101.9" width="10.5" height="17" fill="#f9f9f9" stroke="#555" stroke-width="1.6"/>
<line x1="1756.5" y1="107.6" x2="1767" y2="107.6" stroke="#555" stroke-width="1.3"/>
<line x1="1756.5" y1="113.3" x2="1767" y2="113.3" stroke="#555" stroke-width="1.3"/>
<rect x="1747" y="106.2" width="6.4" height="8.4" fill="#ffffff" stroke="#e8504a" stroke-width="1.7"/>
<line x1="1747.6" y1="114" x2="1752.8" y2="106.8" stroke="#e8504a" stroke-width="1.3"/>
<rect x="1747" y="135.5" width="20.1" height="18.8" fill="#f9f9f9" stroke="#555" stroke-width="1.6"/>
<line x1="1747" y1="144.9" x2="1767.1" y2="144.9" stroke="#555" stroke-width="1.3"/>
<line x1="1755.8" y1="135.5" x2="1755.8" y2="154.3" stroke="#555" stroke-width="1.6"/>
<line x1="1761.5" y1="135.5" x2="1761.5" y2="154.3" stroke="#555" stroke-width="1.3"/>
<line x1="1755.8" y1="140.2" x2="1767.1" y2="140.2" stroke="#555" stroke-width="1.3"/>
<line x1="1755.8" y1="149.6" x2="1767.1" y2="149.6" stroke="#555" stroke-width="1.3"/>
<path d="M1751.4 137.5 L1751.4 141.5 M1749.3 139.5 L1753.5 139.5" fill="none" stroke="#3b97de" stroke-width="1.4"/>
<path d="M1751.4 147 L1751.4 151 M1749.3 149 L1753.5 149" fill="none" stroke="#3b97de" stroke-width="1.4"/>
<path d="M1833.7 75.6 L1837.45 79.4 L1841.2 75.6" fill="none" stroke="#333333" stroke-width="1.3" stroke-linecap="round" stroke-linejoin="round"/>
<path d="M1851.7 109.6 L1855.45 113.4 L1859.2 109.6" fill="none" stroke="#333333" stroke-width="1.3" stroke-linecap="round" stroke-linejoin="round"/>
<line x1="1883.8" y1="70.1" x2="1896" y2="70.1" stroke="#bcbcbc" stroke-width="1.3"/>
<line x1="1885.5" y1="74.3" x2="1896" y2="74.3" stroke="#bcbcbc" stroke-width="1.3"/>
<line x1="1885.5" y1="78.5" x2="1896" y2="78.5" stroke="#bcbcbc" stroke-width="1.3"/>
<line x1="1887.5" y1="82.7" x2="1896" y2="82.7" stroke="#bcbcbc" stroke-width="1.3"/>
<line x1="1876.6" y1="72.1" x2="1881.4" y2="72.1" stroke="#bcbcbc" stroke-width="1.3"/>
<line x1="1879" y1="69.7" x2="1879" y2="74.5" stroke="#bcbcbc" stroke-width="1.3"/>
<line x1="1883.8" y1="104.6" x2="1896" y2="104.6" stroke="#bcbcbc" stroke-width="1.3"/>
<line x1="1885.5" y1="108.8" x2="1896" y2="108.8" stroke="#bcbcbc" stroke-width="1.3"/>
<line x1="1885.5" y1="113" x2="1896" y2="113" stroke="#bcbcbc" stroke-width="1.3"/>
<line x1="1887.5" y1="117.2" x2="1896" y2="117.2" stroke="#bcbcbc" stroke-width="1.3"/>
<line x1="1876.6" y1="106.6" x2="1881.4" y2="106.6" stroke="#bcbcbc" stroke-width="1.3"/>
<path d="M1897.6 181.2 L1897.6 171.4 L1907.4 171.4" fill="none" stroke="#555" stroke-width="1.2"/>
<path d="M1900.5 174.2 L1907.4 181 M1907.4 176.6 L1907.4 181 L1903 181" fill="none" stroke="#555" stroke-width="1.2"/>
<path d="M1984.4 167.6 L1990.5 174.3 L1996.6 167.6" fill="none" stroke="#444444" stroke-width="1.4" stroke-linecap="round" stroke-linejoin="round"/>
<path d="M1781.8 30 L1795.8 30 L1795.8 39.2 L1787.2 39.2 L1783.4 43 L1783.4 39.2 L1781.8 39.2 Z" fill="none" stroke="#444" stroke-width="1.3" stroke-linejoin="round"/>
<path d="M1916 34 L1916 43.2 L1929 43.2 L1929 38.6" fill="none" stroke="#ffffff" stroke-width="1.4"/>
<path d="M1919.2 41 Q1920 34.6 1927.4 34.2 L1927.4 31 L1932.2 35.6 L1927.4 40.2 L1927.4 37.2 Q1922.6 37.2 1919.2 41 Z" fill="none" stroke="#ffffff" stroke-width="1.3" stroke-linejoin="round"/>
<path d="M1991.8 35.4 L1995.55 39.2 L1999.3 35.4" fill="none" stroke="#ffffff" stroke-width="1.4" stroke-linecap="round" stroke-linejoin="round"/>
<rect x="75" y="200.7" width="134.3" height="30.5" rx="6" fill="#ffffff" stroke="#d6d6d6" stroke-width="1"/>
<text x="81.97" y="222.2" textLength="20.03" lengthAdjust="spacingAndGlyphs" style="font-size:18.9px" fill="#242424">A1</text>
<rect x="237.6" y="200.7" width="112.4" height="30.5" rx="6" fill="#fafafa" stroke="#dedede" stroke-width="1"/>
<rect x="356.7" y="200.7" width="1673.3" height="82.1" rx="6" fill="#ffffff" stroke="#dcdcdc" stroke-width="1"/>
<text x="369.32" y="222.7" textLength="164.96" lengthAdjust="spacingAndGlyphs" style="font-size:19.19px" fill="#1f1f1f">Logger Serial Number</text>
<rect x="64" y="291.3" width="1929" height="23.7" fill="#d4eddf"/>
<rect x="64" y="291.3" width="34" height="23.7" fill="#efefef"/>
<line x1="307.7" y1="291.3" x2="307.7" y2="315" stroke="#bcc9c1" stroke-width="1"/>
<line x1="387.2" y1="291.3" x2="387.2" y2="315" stroke="#bcc9c1" stroke-width="1"/>
<line x1="561.5" y1="291.3" x2="561.5" y2="315" stroke="#bcc9c1" stroke-width="1"/>
<line x1="658.7" y1="291.3" x2="658.7" y2="315" stroke="#bcc9c1" stroke-width="1"/>
<line x1="775.6" y1="291.3" x2="775.6" y2="315" stroke="#bcc9c1" stroke-width="1"/>
<line x1="885.2" y1="291.3" x2="885.2" y2="315" stroke="#bcc9c1" stroke-width="1"/>
<line x1="942.5" y1="291.3" x2="942.5" y2="315" stroke="#bcc9c1" stroke-width="1"/>
<line x1="1000.5" y1="291.3" x2="1000.5" y2="315" stroke="#bcc9c1" stroke-width="1"/>
<line x1="1048.4" y1="291.3" x2="1048.4" y2="315" stroke="#bcc9c1" stroke-width="1"/>
<line x1="1096.6" y1="291.3" x2="1096.6" y2="315" stroke="#bcc9c1" stroke-width="1"/>
<line x1="1227.6" y1="291.3" x2="1227.6" y2="315" stroke="#bcc9c1" stroke-width="1"/>
<line x1="1359.3" y1="291.3" x2="1359.3" y2="315" stroke="#bcc9c1" stroke-width="1"/>
<line x1="1490.4" y1="291.3" x2="1490.4" y2="315" stroke="#bcc9c1" stroke-width="1"/>
<line x1="1622" y1="291.3" x2="1622" y2="315" stroke="#bcc9c1" stroke-width="1"/>
<line x1="1753.7" y1="291.3" x2="1753.7" y2="315" stroke="#bcc9c1" stroke-width="1"/>
<line x1="1884.6" y1="291.3" x2="1884.6" y2="315" stroke="#bcc9c1" stroke-width="1"/>
<text x="203.85" y="310.8" style="font-size:18.75px" fill="#1e6e43" text-anchor="middle">A</text>
<text x="347.72" y="310.8" style="font-size:18.75px" fill="#1e6e43" text-anchor="middle">B</text>
<text x="474.47" y="310.8" style="font-size:18.75px" fill="#1e6e43" text-anchor="middle">C</text>
<text x="610.42" y="310.8" style="font-size:18.75px" fill="#1e6e43" text-anchor="middle">D</text>
<text x="717.52" y="310.8" style="font-size:18.75px" fill="#1e6e43" text-anchor="middle">E</text>
<text x="830.79" y="310.8" style="font-size:18.75px" fill="#1e6e43" text-anchor="middle">F</text>
<text x="913.62" y="310.8" style="font-size:18.75px" fill="#1e6e43" text-anchor="middle">G</text>
<text x="971.5" y="310.8" style="font-size:18.75px" fill="#1e6e43" text-anchor="middle">H</text>
<text x="1024.45" y="310.8" style="font-size:18.75px" fill="#1e6e43" text-anchor="middle">I</text>
<text x="1071.95" y="310.8" style="font-size:18.75px" fill="#1e6e43" text-anchor="middle">J</text>
<text x="1162.76" y="310.8" style="font-size:18.75px" fill="#1e6e43" text-anchor="middle">K</text>
<text x="1293.91" y="310.8" style="font-size:18.75px" fill="#1e6e43" text-anchor="middle">L</text>
<text x="1424.85" y="310.8" style="font-size:18.75px" fill="#1e6e43" text-anchor="middle">M</text>
<text x="1556.2" y="310.8" style="font-size:18.75px" fill="#1e6e43" text-anchor="middle">N</text>
<text x="1687.85" y="310.8" style="font-size:18.75px" fill="#1e6e43" text-anchor="middle">O</text>
<text x="1819.42" y="310.8" style="font-size:18.75px" fill="#1e6e43" text-anchor="middle">P</text>
<text x="1950" y="310.8" style="font-size:18.75px" fill="#1e6e43" text-anchor="middle">Q</text>
<rect x="64" y="315" width="34" height="630.5" fill="#d4eddf"/>
<rect x="100" y="317" width="1893" height="628.5" fill="#c8c8c8"/>
<rect x="100" y="318" width="207.2" height="24.4" fill="#ffffff"/>
<line x1="100" y1="342.9" x2="1993" y2="342.9" stroke="#b3b3b3" stroke-width="1.2"/>
<line x1="64" y1="342.9" x2="98" y2="342.9" stroke="#cdbdc2" stroke-width="1" stroke-dasharray="1.5 1.5"/>
<line x1="100" y1="369.6" x2="1993" y2="369.6" stroke="#b3b3b3" stroke-width="1.2"/>
<line x1="64" y1="369.6" x2="98" y2="369.6" stroke="#cdbdc2" stroke-width="1" stroke-dasharray="1.5 1.5"/>
<line x1="100" y1="396.3" x2="1993" y2="396.3" stroke="#b3b3b3" stroke-width="1.2"/>
<line x1="64" y1="396.3" x2="98" y2="396.3" stroke="#cdbdc2" stroke-width="1" stroke-dasharray="1.5 1.5"/>
<line x1="100" y1="423" x2="1993" y2="423" stroke="#b3b3b3" stroke-width="1.2"/>
<line x1="64" y1="423" x2="98" y2="423" stroke="#cdbdc2" stroke-width="1" stroke-dasharray="1.5 1.5"/>
<line x1="100" y1="449.7" x2="1993" y2="449.7" stroke="#b3b3b3" stroke-width="1.2"/>
<line x1="64" y1="449.7" x2="98" y2="449.7" stroke="#cdbdc2" stroke-width="1" stroke-dasharray="1.5 1.5"/>
<line x1="100" y1="476.4" x2="1993" y2="476.4" stroke="#b3b3b3" stroke-width="1.2"/>
<line x1="64" y1="476.4" x2="98" y2="476.4" stroke="#cdbdc2" stroke-width="1" stroke-dasharray="1.5 1.5"/>
<line x1="100" y1="503.1" x2="1993" y2="503.1" stroke="#b3b3b3" stroke-width="1.2"/>
<line x1="64" y1="503.1" x2="98" y2="503.1" stroke="#cdbdc2" stroke-width="1" stroke-dasharray="1.5 1.5"/>
<line x1="100" y1="529.8" x2="1993" y2="529.8" stroke="#b3b3b3" stroke-width="1.2"/>
<line x1="64" y1="529.8" x2="98" y2="529.8" stroke="#cdbdc2" stroke-width="1" stroke-dasharray="1.5 1.5"/>
<line x1="100" y1="556.5" x2="1993" y2="556.5" stroke="#b3b3b3" stroke-width="1.2"/>
<line x1="64" y1="556.5" x2="98" y2="556.5" stroke="#cdbdc2" stroke-width="1" stroke-dasharray="1.5 1.5"/>
<line x1="100" y1="583.2" x2="1993" y2="583.2" stroke="#b3b3b3" stroke-width="1.2"/>
<line x1="64" y1="583.2" x2="98" y2="583.2" stroke="#cdbdc2" stroke-width="1" stroke-dasharray="1.5 1.5"/>
<line x1="100" y1="609.9" x2="1993" y2="609.9" stroke="#b3b3b3" stroke-width="1.2"/>
<line x1="64" y1="609.9" x2="98" y2="609.9" stroke="#cdbdc2" stroke-width="1" stroke-dasharray="1.5 1.5"/>
<line x1="100" y1="636.6" x2="1993" y2="636.6" stroke="#b3b3b3" stroke-width="1.2"/>
<line x1="64" y1="636.6" x2="98" y2="636.6" stroke="#cdbdc2" stroke-width="1" stroke-dasharray="1.5 1.5"/>
<line x1="100" y1="663.3" x2="1993" y2="663.3" stroke="#b3b3b3" stroke-width="1.2"/>
<line x1="64" y1="663.3" x2="98" y2="663.3" stroke="#cdbdc2" stroke-width="1" stroke-dasharray="1.5 1.5"/>
<line x1="100" y1="690" x2="1993" y2="690" stroke="#b3b3b3" stroke-width="1.2"/>
<line x1="64" y1="690" x2="98" y2="690" stroke="#cdbdc2" stroke-width="1" stroke-dasharray="1.5 1.5"/>
<line x1="100" y1="716.7" x2="1993" y2="716.7" stroke="#b3b3b3" stroke-width="1.2"/>
<line x1="64" y1="716.7" x2="98" y2="716.7" stroke="#cdbdc2" stroke-width="1" stroke-dasharray="1.5 1.5"/>
<line x1="100" y1="743.4" x2="1993" y2="743.4" stroke="#b3b3b3" stroke-width="1.2"/>
<line x1="64" y1="743.4" x2="98" y2="743.4" stroke="#cdbdc2" stroke-width="1" stroke-dasharray="1.5 1.5"/>
<line x1="100" y1="770.1" x2="1993" y2="770.1" stroke="#b3b3b3" stroke-width="1.2"/>
<line x1="64" y1="770.1" x2="98" y2="770.1" stroke="#cdbdc2" stroke-width="1" stroke-dasharray="1.5 1.5"/>
<line x1="100" y1="796.8" x2="1993" y2="796.8" stroke="#b3b3b3" stroke-width="1.2"/>
<line x1="64" y1="796.8" x2="98" y2="796.8" stroke="#cdbdc2" stroke-width="1" stroke-dasharray="1.5 1.5"/>
<line x1="100" y1="823.5" x2="1993" y2="823.5" stroke="#b3b3b3" stroke-width="1.2"/>
<line x1="64" y1="823.5" x2="98" y2="823.5" stroke="#cdbdc2" stroke-width="1" stroke-dasharray="1.5 1.5"/>
<line x1="100" y1="850.2" x2="1993" y2="850.2" stroke="#b3b3b3" stroke-width="1.2"/>
<line x1="64" y1="850.2" x2="98" y2="850.2" stroke="#cdbdc2" stroke-width="1" stroke-dasharray="1.5 1.5"/>
<line x1="100" y1="876.9" x2="1993" y2="876.9" stroke="#b3b3b3" stroke-width="1.2"/>
<line x1="64" y1="876.9" x2="98" y2="876.9" stroke="#cdbdc2" stroke-width="1" stroke-dasharray="1.5 1.5"/>
<line x1="100" y1="903.6" x2="1993" y2="903.6" stroke="#b3b3b3" stroke-width="1.2"/>
<line x1="64" y1="903.6" x2="98" y2="903.6" stroke="#cdbdc2" stroke-width="1" stroke-dasharray="1.5 1.5"/>
<line x1="100" y1="930.3" x2="1993" y2="930.3" stroke="#b3b3b3" stroke-width="1.2"/>
<line x1="64" y1="930.3" x2="98" y2="930.3" stroke="#cdbdc2" stroke-width="1" stroke-dasharray="1.5 1.5"/>
<line x1="100" y1="957" x2="1993" y2="957" stroke="#b3b3b3" stroke-width="1.2"/>
<line x1="64" y1="957" x2="98" y2="957" stroke="#cdbdc2" stroke-width="1" stroke-dasharray="1.5 1.5"/>
<line x1="307.7" y1="317" x2="307.7" y2="945.5" stroke="#b3b3b3" stroke-width="1.2"/>
<line x1="387.2" y1="317" x2="387.2" y2="945.5" stroke="#b3b3b3" stroke-width="1.2"/>
<line x1="561.5" y1="317" x2="561.5" y2="945.5" stroke="#b3b3b3" stroke-width="1.2"/>
<line x1="658.7" y1="317" x2="658.7" y2="945.5" stroke="#b3b3b3" stroke-width="1.2"/>
<line x1="775.6" y1="317" x2="775.6" y2="945.5" stroke="#b3b3b3" stroke-width="1.2"/>
<line x1="885.2" y1="317" x2="885.2" y2="945.5" stroke="#b3b3b3" stroke-width="1.2"/>
<line x1="942.5" y1="317" x2="942.5" y2="945.5" stroke="#b3b3b3" stroke-width="1.2"/>
<line x1="1000.5" y1="317" x2="1000.5" y2="945.5" stroke="#b3b3b3" stroke-width="1.2"/>
<line x1="1048.4" y1="317" x2="1048.4" y2="945.5" stroke="#b3b3b3" stroke-width="1.2"/>
<line x1="1096.6" y1="317" x2="1096.6" y2="945.5" stroke="#b3b3b3" stroke-width="1.2"/>
<line x1="1227.6" y1="317" x2="1227.6" y2="945.5" stroke="#b3b3b3" stroke-width="1.2"/>
<line x1="1359.3" y1="317" x2="1359.3" y2="945.5" stroke="#b3b3b3" stroke-width="1.2"/>
<line x1="1490.4" y1="317" x2="1490.4" y2="945.5" stroke="#b3b3b3" stroke-width="1.2"/>
<line x1="1622" y1="317" x2="1622" y2="945.5" stroke="#b3b3b3" stroke-width="1.2"/>
<line x1="1753.7" y1="317" x2="1753.7" y2="945.5" stroke="#b3b3b3" stroke-width="1.2"/>
<line x1="1884.6" y1="317" x2="1884.6" y2="945.5" stroke="#b3b3b3" stroke-width="1.2"/>
<rect x="98" y="315" width="1895" height="2" fill="#0f6b38"/>
<rect x="98" y="315" width="2" height="630.5" fill="#0f6b38"/>
<text x="81.54" y="336.9" style="font-size:17.44px" fill="#2e6a4b" text-anchor="middle">1</text>
<text x="81.3" y="363.6" style="font-size:17.44px" fill="#2323e6" text-anchor="middle">2</text>
<text x="81.25" y="390.3" style="font-size:17.44px" fill="#2323e6" text-anchor="middle">3</text>
<text x="81.24" y="417" style="font-size:17.44px" fill="#2323e6" text-anchor="middle">4</text>
<text x="81.28" y="443.7" style="font-size:17.44px" fill="#2323e6" text-anchor="middle">5</text>
<text x="81.36" y="470.4" style="font-size:17.44px" fill="#2323e6" text-anchor="middle">6</text>
<text x="81.31" y="497.1" style="font-size:17.44px" fill="#2323e6" text-anchor="middle">7</text>
<text x="81.3" y="523.8" style="font-size:17.44px" fill="#2323e6" text-anchor="middle">8</text>
<text x="81.3" y="550.5" style="font-size:17.44px" fill="#2323e6" text-anchor="middle">9</text>
<text x="81.62" y="577.2" style="font-size:17.44px" fill="#2323e6" text-anchor="middle">10</text>
<text x="81.54" y="603.9" style="font-size:17.44px" fill="#2323e6" text-anchor="middle">11</text>
<text x="81.53" y="630.6" style="font-size:17.44px" fill="#2323e6" text-anchor="middle">12</text>
<text x="81.58" y="657.3" style="font-size:17.44px" fill="#2323e6" text-anchor="middle">13</text>
<text x="81.71" y="684" style="font-size:17.44px" fill="#2323e6" text-anchor="middle">14</text>
<text x="81.6" y="710.7" style="font-size:17.44px" fill="#2323e6" text-anchor="middle">15</text>
<text x="81.58" y="737.4" style="font-size:17.44px" fill="#2323e6" text-anchor="middle">16</text>
<text x="81.53" y="764.1" style="font-size:17.44px" fill="#2323e6" text-anchor="middle">17</text>
<text x="81.59" y="790.8" style="font-size:17.44px" fill="#2323e6" text-anchor="middle">18</text>
<text x="81.55" y="817.5" style="font-size:17.44px" fill="#2323e6" text-anchor="middle">19</text>
<text x="81.4" y="844.2" style="font-size:17.44px" fill="#2323e6" text-anchor="middle">20</text>
<text x="81.31" y="870.9" style="font-size:17.44px" fill="#2323e6" text-anchor="middle">21</text>
<text x="81.3" y="897.6" style="font-size:17.44px" fill="#2323e6" text-anchor="middle">22</text>
<text x="81.36" y="924.3" style="font-size:17.44px" fill="#2323e6" text-anchor="middle">23</text>
<text x="81.48" y="951" style="font-size:17.44px" fill="#2323e6" text-anchor="middle">24</text>
<text x="102.72" y="337" textLength="164.96" lengthAdjust="spacingAndGlyphs" style="font-size:17.59px" fill="#141414">Logger Serial Number</text>
<text x="310.28" y="337" textLength="47.28" lengthAdjust="spacingAndGlyphs" style="font-size:17.59px" fill="#141414">Log ID</text>
<text x="391.83" y="337" textLength="132" lengthAdjust="spacingAndGlyphs" style="font-size:17.59px" fill="#141414">Timestamp (UTC)</text>
<text x="564.97" y="337" textLength="63.56" lengthAdjust="spacingAndGlyphs" style="font-size:17.59px" fill="#141414">Address</text>
<text x="662.31" y="337" textLength="81.02" lengthAdjust="spacingAndGlyphs" style="font-size:17.59px" fill="#141414">Command</text>
<text x="778.18" y="337" textLength="75.81" lengthAdjust="spacingAndGlyphs" style="font-size:17.59px" fill="#141414">Data &gt; &gt; &gt;</text>
<text x="227.19" y="363.6" textLength="77.08" lengthAdjust="spacingAndGlyphs" style="font-size:17.59px" fill="#141414">21000107</text>
<text x="325.85" y="363.6" textLength="57.81" lengthAdjust="spacingAndGlyphs" style="font-size:17.59px" fill="#141414">108333</text>
<text x="442.28" y="363.6" textLength="115.6" lengthAdjust="spacingAndGlyphs" style="font-size:17.59px" fill="#141414">7/23/2024 0:10</text>
<text x="564.62" y="363.6" style="font-size:17.59px" fill="#141414">@</text>
<text x="661.76" y="363.6" style="font-size:17.59px" fill="#141414">M</text>
<text x="848" y="363.6" textLength="33.72" lengthAdjust="spacingAndGlyphs" style="font-size:17.59px" fill="#141414">4.19</text>
<text x="905.21" y="363.6" textLength="33.72" lengthAdjust="spacingAndGlyphs" style="font-size:17.59px" fill="#141414">44.5</text>
<text x="967.8" y="363.6" textLength="28.9" lengthAdjust="spacingAndGlyphs" style="font-size:17.59px" fill="#141414">164</text>
<text x="1020.78" y="363.6" textLength="24.08" lengthAdjust="spacingAndGlyphs" style="font-size:17.59px" fill="#141414">5.6</text>
<text x="227.19" y="390.3" textLength="77.08" lengthAdjust="spacingAndGlyphs" style="font-size:17.59px" fill="#141414">21000107</text>
<text x="325.6" y="390.3" textLength="57.81" lengthAdjust="spacingAndGlyphs" style="font-size:17.59px" fill="#141414">108334</text>
<text x="442.28" y="390.3" textLength="115.6" lengthAdjust="spacingAndGlyphs" style="font-size:17.59px" fill="#141414">7/23/2024 0:20</text>
<text x="564.62" y="390.3" style="font-size:17.59px" fill="#141414">@</text>
<text x="661.76" y="390.3" style="font-size:17.59px" fill="#141414">M</text>
<text x="848" y="390.3" textLength="33.72" lengthAdjust="spacingAndGlyphs" style="font-size:17.59px" fill="#141414">4.19</text>
<text x="895.58" y="390.3" textLength="43.35" lengthAdjust="spacingAndGlyphs" style="font-size:17.59px" fill="#141414">44.25</text>
<text x="967.97" y="390.3" textLength="28.9" lengthAdjust="spacingAndGlyphs" style="font-size:17.59px" fill="#141414">150</text>
<text x="1020.75" y="390.3" textLength="24.08" lengthAdjust="spacingAndGlyphs" style="font-size:17.59px" fill="#141414">5.5</text>
<text x="227.19" y="417" textLength="77.08" lengthAdjust="spacingAndGlyphs" style="font-size:17.59px" fill="#141414">21000107</text>
<text x="325.82" y="417" textLength="57.81" lengthAdjust="spacingAndGlyphs" style="font-size:17.59px" fill="#141414">108335</text>
<text x="442.28" y="417" textLength="115.6" lengthAdjust="spacingAndGlyphs" style="font-size:17.59px" fill="#141414">7/23/2024 0:30</text>
<text x="564.62" y="417" style="font-size:17.59px" fill="#141414">@</text>
<text x="661.76" y="417" style="font-size:17.59px" fill="#141414">M</text>
<text x="848" y="417" textLength="33.72" lengthAdjust="spacingAndGlyphs" style="font-size:17.59px" fill="#141414">4.19</text>
<text x="919.44" y="417" textLength="19.27" lengthAdjust="spacingAndGlyphs" style="font-size:17.59px" fill="#141414">44</text>
<text x="968.02" y="417" textLength="28.9" lengthAdjust="spacingAndGlyphs" style="font-size:17.59px" fill="#141414">135</text>
<text x="1011.14" y="417" textLength="33.72" lengthAdjust="spacingAndGlyphs" style="font-size:17.59px" fill="#141414">5.48</text>
<text x="227.19" y="443.7" textLength="77.08" lengthAdjust="spacingAndGlyphs" style="font-size:17.59px" fill="#141414">21000107</text>
<text x="325.85" y="443.7" textLength="57.81" lengthAdjust="spacingAndGlyphs" style="font-size:17.59px" fill="#141414">108336</text>
<text x="442.28" y="443.7" textLength="115.6" lengthAdjust="spacingAndGlyphs" style="font-size:17.59px" fill="#141414">7/23/2024 0:40</text>
<text x="564.62" y="443.7" style="font-size:17.59px" fill="#141414">@</text>
<text x="661.76" y="443.7" style="font-size:17.59px" fill="#141414">M</text>
<text x="848" y="443.7" textLength="33.72" lengthAdjust="spacingAndGlyphs" style="font-size:17.59px" fill="#141414">4.19</text>
<text x="905.21" y="443.7" textLength="33.72" lengthAdjust="spacingAndGlyphs" style="font-size:17.59px" fill="#141414">43.5</text>
<text x="968.05" y="443.7" textLength="28.9" lengthAdjust="spacingAndGlyphs" style="font-size:17.59px" fill="#141414">118</text>
<text x="1011.11" y="443.7" textLength="33.72" lengthAdjust="spacingAndGlyphs" style="font-size:17.59px" fill="#141414">5.45</text>
<text x="227.19" y="470.4" textLength="77.08" lengthAdjust="spacingAndGlyphs" style="font-size:17.59px" fill="#141414">21000107</text>
<text x="325.96" y="470.4" textLength="57.81" lengthAdjust="spacingAndGlyphs" style="font-size:17.59px" fill="#141414">108337</text>
<text x="442.28" y="470.4" textLength="115.6" lengthAdjust="spacingAndGlyphs" style="font-size:17.59px" fill="#141414">7/23/2024 0:50</text>
<text x="564.62" y="470.4" style="font-size:17.59px" fill="#141414">@</text>
<text x="661.76" y="470.4" style="font-size:17.59px" fill="#141414">M</text>
<text x="848" y="470.4" textLength="33.72" lengthAdjust="spacingAndGlyphs" style="font-size:17.59px" fill="#141414">4.19</text>
<text x="919.69" y="470.4" textLength="19.27" lengthAdjust="spacingAndGlyphs" style="font-size:17.59px" fill="#141414">43</text>
<text x="968.02" y="470.4" textLength="28.9" lengthAdjust="spacingAndGlyphs" style="font-size:17.59px" fill="#141414">105</text>
<text x="1011.25" y="470.4" textLength="33.72" lengthAdjust="spacingAndGlyphs" style="font-size:17.59px" fill="#141414">5.42</text>
<text x="227.19" y="497.1" textLength="77.08" lengthAdjust="spacingAndGlyphs" style="font-size:17.59px" fill="#141414">21000107</text>
<text x="325.85" y="497.1" textLength="57.81" lengthAdjust="spacingAndGlyphs" style="font-size:17.59px" fill="#141414">108338</text>
<text x="442.28" y="497.1" textLength="115.6" lengthAdjust="spacingAndGlyphs" style="font-size:17.59px" fill="#141414">7/23/2024 1:00</text>
<text x="564.62" y="497.1" style="font-size:17.59px" fill="#141414">@</text>
<text x="661.76" y="497.1" style="font-size:17.59px" fill="#141414">M</text>
<text x="848" y="497.1" textLength="33.72" lengthAdjust="spacingAndGlyphs" style="font-size:17.59px" fill="#141414">4.19</text>
<text x="905.21" y="497.1" textLength="33.72" lengthAdjust="spacingAndGlyphs" style="font-size:17.59px" fill="#141414">42.5</text>
<text x="977.61" y="497.1" textLength="19.27" lengthAdjust="spacingAndGlyphs" style="font-size:17.59px" fill="#141414">90</text>
<text x="1011.23" y="497.1" textLength="33.72" lengthAdjust="spacingAndGlyphs" style="font-size:17.59px" fill="#141414">5.41</text>
<text x="227.19" y="523.8" textLength="77.08" lengthAdjust="spacingAndGlyphs" style="font-size:17.59px" fill="#141414">21000107</text>
<text x="325.91" y="523.8" textLength="57.81" lengthAdjust="spacingAndGlyphs" style="font-size:17.59px" fill="#141414">108339</text>
<text x="442.28" y="523.8" textLength="115.6" lengthAdjust="spacingAndGlyphs" style="font-size:17.59px" fill="#141414">7/23/2024 1:10</text>
<text x="564.62" y="523.8" style="font-size:17.59px" fill="#141414">@</text>
<text x="661.76" y="523.8" style="font-size:17.59px" fill="#141414">M</text>
<text x="848" y="523.8" textLength="33.72" lengthAdjust="spacingAndGlyphs" style="font-size:17.59px" fill="#141414">4.19</text>
<text x="919.8" y="523.8" textLength="19.27" lengthAdjust="spacingAndGlyphs" style="font-size:17.59px" fill="#141414">42</text>
<text x="977.8" y="523.8" textLength="19.27" lengthAdjust="spacingAndGlyphs" style="font-size:17.59px" fill="#141414">77</text>
<text x="1011.14" y="523.8" textLength="33.72" lengthAdjust="spacingAndGlyphs" style="font-size:17.59px" fill="#141414">5.38</text>
<text x="227.19" y="550.5" textLength="77.08" lengthAdjust="spacingAndGlyphs" style="font-size:17.59px" fill="#141414">21000107</text>
<text x="325.77" y="550.5" textLength="57.81" lengthAdjust="spacingAndGlyphs" style="font-size:17.59px" fill="#141414">108340</text>
<text x="442.28" y="550.5" textLength="115.6" lengthAdjust="spacingAndGlyphs" style="font-size:17.59px" fill="#141414">7/23/2024 1:20</text>
<text x="564.62" y="550.5" style="font-size:17.59px" fill="#141414">@</text>
<text x="661.76" y="550.5" style="font-size:17.59px" fill="#141414">M</text>
<text x="848" y="550.5" textLength="33.72" lengthAdjust="spacingAndGlyphs" style="font-size:17.59px" fill="#141414">4.19</text>
<text x="895.58" y="550.5" textLength="43.35" lengthAdjust="spacingAndGlyphs" style="font-size:17.59px" fill="#141414">41.25</text>
<text x="977.66" y="550.5" textLength="19.27" lengthAdjust="spacingAndGlyphs" style="font-size:17.59px" fill="#141414">65</text>
<text x="1011.25" y="550.5" textLength="33.72" lengthAdjust="spacingAndGlyphs" style="font-size:17.59px" fill="#141414">5.32</text>
<text x="227.19" y="577.2" textLength="77.08" lengthAdjust="spacingAndGlyphs" style="font-size:17.59px" fill="#141414">21000107</text>
<text x="325.94" y="577.2" textLength="57.81" lengthAdjust="spacingAndGlyphs" style="font-size:17.59px" fill="#141414">108341</text>
<text x="442.28" y="577.2" textLength="115.6" lengthAdjust="spacingAndGlyphs" style="font-size:17.59px" fill="#141414">7/23/2024 1:30</text>
<text x="564.62" y="577.2" style="font-size:17.59px" fill="#141414">@</text>
<text x="661.76" y="577.2" style="font-size:17.59px" fill="#141414">M</text>
<text x="848" y="577.2" textLength="33.72" lengthAdjust="spacingAndGlyphs" style="font-size:17.59px" fill="#141414">4.19</text>
<text x="895.58" y="577.2" textLength="43.35" lengthAdjust="spacingAndGlyphs" style="font-size:17.59px" fill="#141414">40.25</text>
<text x="977.69" y="577.2" textLength="19.27" lengthAdjust="spacingAndGlyphs" style="font-size:17.59px" fill="#141414">53</text>
<text x="1011.14" y="577.2" textLength="33.72" lengthAdjust="spacingAndGlyphs" style="font-size:17.59px" fill="#141414">5.18</text>
<text x="227.19" y="603.9" textLength="77.08" lengthAdjust="spacingAndGlyphs" style="font-size:17.59px" fill="#141414">21000107</text>
<text x="325.96" y="603.9" textLength="57.81" lengthAdjust="spacingAndGlyphs" style="font-size:17.59px" fill="#141414">108342</text>
<text x="442.28" y="603.9" textLength="115.6" lengthAdjust="spacingAndGlyphs" style="font-size:17.59px" fill="#141414">7/23/2024 1:40</text>
<text x="564.62" y="603.9" style="font-size:17.59px" fill="#141414">@</text>
<text x="661.76" y="603.9" style="font-size:17.59px" fill="#141414">M</text>
<text x="857.69" y="603.9" textLength="24.08" lengthAdjust="spacingAndGlyphs" style="font-size:17.59px" fill="#141414">4.2</text>
<text x="905.21" y="603.9" textLength="33.72" lengthAdjust="spacingAndGlyphs" style="font-size:17.59px" fill="#141414">39.5</text>
<text x="977.69" y="603.9" textLength="19.27" lengthAdjust="spacingAndGlyphs" style="font-size:17.59px" fill="#141414">43</text>
<text x="1011.14" y="603.9" textLength="33.72" lengthAdjust="spacingAndGlyphs" style="font-size:17.59px" fill="#141414">4.56</text>
<text x="227.19" y="630.6" textLength="77.08" lengthAdjust="spacingAndGlyphs" style="font-size:17.59px" fill="#141414">21000107</text>
<text x="325.85" y="630.6" textLength="57.81" lengthAdjust="spacingAndGlyphs" style="font-size:17.59px" fill="#141414">108343</text>
<text x="442.28" y="630.6" textLength="115.6" lengthAdjust="spacingAndGlyphs" style="font-size:17.59px" fill="#141414">7/23/2024 1:50</text>
<text x="564.62" y="630.6" style="font-size:17.59px" fill="#141414">@</text>
<text x="661.76" y="630.6" style="font-size:17.59px" fill="#141414">M</text>
<text x="857.69" y="630.6" textLength="24.08" lengthAdjust="spacingAndGlyphs" style="font-size:17.59px" fill="#141414">4.2</text>
<text x="895.58" y="630.6" textLength="43.35" lengthAdjust="spacingAndGlyphs" style="font-size:17.59px" fill="#141414">38.25</text>
<text x="977.8" y="630.6" textLength="19.27" lengthAdjust="spacingAndGlyphs" style="font-size:17.59px" fill="#141414">32</text>
<text x="1020.86" y="630.6" textLength="24.08" lengthAdjust="spacingAndGlyphs" style="font-size:17.59px" fill="#141414">5.1</text>
<text x="227.19" y="657.3" textLength="77.08" lengthAdjust="spacingAndGlyphs" style="font-size:17.59px" fill="#141414">21000107</text>
<text x="325.6" y="657.3" textLength="57.81" lengthAdjust="spacingAndGlyphs" style="font-size:17.59px" fill="#141414">108344</text>
<text x="442.28" y="657.3" textLength="115.6" lengthAdjust="spacingAndGlyphs" style="font-size:17.59px" fill="#141414">7/23/2024 2:00</text>
<text x="564.62" y="657.3" style="font-size:17.59px" fill="#141414">@</text>
<text x="661.76" y="657.3" style="font-size:17.59px" fill="#141414">M</text>
<text x="857.69" y="657.3" textLength="24.08" lengthAdjust="spacingAndGlyphs" style="font-size:17.59px" fill="#141414">4.2</text>
<text x="919.8" y="657.3" textLength="19.27" lengthAdjust="spacingAndGlyphs" style="font-size:17.59px" fill="#141414">37</text>
<text x="977.44" y="657.3" textLength="19.27" lengthAdjust="spacingAndGlyphs" style="font-size:17.59px" fill="#141414">24</text>
<text x="1020.84" y="657.3" textLength="24.08" lengthAdjust="spacingAndGlyphs" style="font-size:17.59px" fill="#141414">4.9</text>
<text x="227.19" y="684" textLength="77.08" lengthAdjust="spacingAndGlyphs" style="font-size:17.59px" fill="#141414">21000107</text>
<text x="325.82" y="684" textLength="57.81" lengthAdjust="spacingAndGlyphs" style="font-size:17.59px" fill="#141414">108345</text>
<text x="442.28" y="684" textLength="115.6" lengthAdjust="spacingAndGlyphs" style="font-size:17.59px" fill="#141414">7/23/2024 2:10</text>
<text x="564.62" y="684" style="font-size:17.59px" fill="#141414">@</text>
<text x="661.76" y="684" style="font-size:17.59px" fill="#141414">M</text>
<text x="857.69" y="684" textLength="24.08" lengthAdjust="spacingAndGlyphs" style="font-size:17.59px" fill="#141414">4.2</text>
<text x="895.58" y="684" textLength="43.35" lengthAdjust="spacingAndGlyphs" style="font-size:17.59px" fill="#141414">34.25</text>
<text x="977.8" y="684" textLength="19.27" lengthAdjust="spacingAndGlyphs" style="font-size:17.59px" fill="#141414">17</text>
<text x="1011.25" y="684" textLength="33.72" lengthAdjust="spacingAndGlyphs" style="font-size:17.59px" fill="#141414">4.42</text>
<text x="227.19" y="710.7" textLength="77.08" lengthAdjust="spacingAndGlyphs" style="font-size:17.59px" fill="#141414">21000107</text>
<text x="325.85" y="710.7" textLength="57.81" lengthAdjust="spacingAndGlyphs" style="font-size:17.59px" fill="#141414">108346</text>
<text x="442.28" y="710.7" textLength="115.6" lengthAdjust="spacingAndGlyphs" style="font-size:17.59px" fill="#141414">7/23/2024 2:20</text>
<text x="564.62" y="710.7" style="font-size:17.59px" fill="#141414">@</text>
<text x="661.76" y="710.7" style="font-size:17.59px" fill="#141414">M</text>
<text x="848" y="710.7" textLength="33.72" lengthAdjust="spacingAndGlyphs" style="font-size:17.59px" fill="#141414">4.19</text>
<text x="895.58" y="710.7" textLength="43.35" lengthAdjust="spacingAndGlyphs" style="font-size:17.59px" fill="#141414">31.75</text>
<text x="977.44" y="710.7" textLength="19.27" lengthAdjust="spacingAndGlyphs" style="font-size:17.59px" fill="#141414">14</text>
<text x="1011.11" y="710.7" textLength="33.72" lengthAdjust="spacingAndGlyphs" style="font-size:17.59px" fill="#141414">4.45</text>
<text x="227.19" y="737.4" textLength="77.08" lengthAdjust="spacingAndGlyphs" style="font-size:17.59px" fill="#141414">21000107</text>
<text x="325.96" y="737.4" textLength="57.81" lengthAdjust="spacingAndGlyphs" style="font-size:17.59px" fill="#141414">108347</text>
<text x="442.28" y="737.4" textLength="115.6" lengthAdjust="spacingAndGlyphs" style="font-size:17.59px" fill="#141414">7/23/2024 2:30</text>
<text x="564.62" y="737.4" style="font-size:17.59px" fill="#141414">@</text>
<text x="661.76" y="737.4" style="font-size:17.59px" fill="#141414">M</text>
<text x="848" y="737.4" textLength="33.72" lengthAdjust="spacingAndGlyphs" style="font-size:17.59px" fill="#141414">4.19</text>
<text x="905.21" y="737.4" textLength="33.72" lengthAdjust="spacingAndGlyphs" style="font-size:17.59px" fill="#141414">30.5</text>
<text x="977.78" y="737.4" textLength="19.27" lengthAdjust="spacingAndGlyphs" style="font-size:17.59px" fill="#141414">11</text>
<text x="1011.23" y="737.4" textLength="33.72" lengthAdjust="spacingAndGlyphs" style="font-size:17.59px" fill="#141414">4.51</text>
<text x="227.19" y="764.1" textLength="77.08" lengthAdjust="spacingAndGlyphs" style="font-size:17.59px" fill="#141414">21000107</text>
<text x="325.85" y="764.1" textLength="57.81" lengthAdjust="spacingAndGlyphs" style="font-size:17.59px" fill="#141414">108348</text>
<text x="442.28" y="764.1" textLength="115.6" lengthAdjust="spacingAndGlyphs" style="font-size:17.59px" fill="#141414">7/23/2024 2:40</text>
<text x="564.62" y="764.1" style="font-size:17.59px" fill="#141414">@</text>
<text x="661.76" y="764.1" style="font-size:17.59px" fill="#141414">M</text>
<text x="848" y="764.1" textLength="33.72" lengthAdjust="spacingAndGlyphs" style="font-size:17.59px" fill="#141414">4.19</text>
<text x="919.75" y="764.1" textLength="19.27" lengthAdjust="spacingAndGlyphs" style="font-size:17.59px" fill="#141414">29</text>
<text x="987.32" y="764.1" textLength="9.63" lengthAdjust="spacingAndGlyphs" style="font-size:17.59px" fill="#141414">8</text>
<text x="1011.11" y="764.1" textLength="33.72" lengthAdjust="spacingAndGlyphs" style="font-size:17.59px" fill="#141414">4.35</text>
<text x="227.19" y="790.8" textLength="77.08" lengthAdjust="spacingAndGlyphs" style="font-size:17.59px" fill="#141414">21000107</text>
<text x="325.91" y="790.8" textLength="57.81" lengthAdjust="spacingAndGlyphs" style="font-size:17.59px" fill="#141414">108349</text>
<text x="442.28" y="790.8" textLength="115.6" lengthAdjust="spacingAndGlyphs" style="font-size:17.59px" fill="#141414">7/23/2024 2:50</text>
<text x="564.62" y="790.8" style="font-size:17.59px" fill="#141414">@</text>
<text x="661.76" y="790.8" style="font-size:17.59px" fill="#141414">M</text>
<text x="848" y="790.8" textLength="33.72" lengthAdjust="spacingAndGlyphs" style="font-size:17.59px" fill="#141414">4.19</text>
<text x="919.68" y="790.8" textLength="19.27" lengthAdjust="spacingAndGlyphs" style="font-size:17.59px" fill="#141414">28</text>
<text x="987.29" y="790.8" textLength="9.63" lengthAdjust="spacingAndGlyphs" style="font-size:17.59px" fill="#141414">5</text>
<text x="1011.11" y="790.8" textLength="33.72" lengthAdjust="spacingAndGlyphs" style="font-size:17.59px" fill="#141414">4.15</text>
<text x="227.19" y="817.5" textLength="77.08" lengthAdjust="spacingAndGlyphs" style="font-size:17.59px" fill="#141414">21000107</text>
<text x="325.77" y="817.5" textLength="57.81" lengthAdjust="spacingAndGlyphs" style="font-size:17.59px" fill="#141414">108350</text>
<text x="442.28" y="817.5" textLength="115.6" lengthAdjust="spacingAndGlyphs" style="font-size:17.59px" fill="#141414">7/23/2024 3:00</text>
<text x="564.62" y="817.5" style="font-size:17.59px" fill="#141414">@</text>
<text x="661.76" y="817.5" style="font-size:17.59px" fill="#141414">M</text>
<text x="848" y="817.5" textLength="33.72" lengthAdjust="spacingAndGlyphs" style="font-size:17.59px" fill="#141414">4.19</text>
<text x="919.8" y="817.5" textLength="19.27" lengthAdjust="spacingAndGlyphs" style="font-size:17.59px" fill="#141414">27</text>
<text x="987.33" y="817.5" textLength="9.63" lengthAdjust="spacingAndGlyphs" style="font-size:17.59px" fill="#141414">3</text>
<text x="1011.25" y="817.5" textLength="33.72" lengthAdjust="spacingAndGlyphs" style="font-size:17.59px" fill="#141414">3.82</text>
<text x="227.19" y="844.2" textLength="77.08" lengthAdjust="spacingAndGlyphs" style="font-size:17.59px" fill="#141414">21000107</text>
<text x="325.94" y="844.2" textLength="57.81" lengthAdjust="spacingAndGlyphs" style="font-size:17.59px" fill="#141414">108351</text>
<text x="442.28" y="844.2" textLength="115.6" lengthAdjust="spacingAndGlyphs" style="font-size:17.59px" fill="#141414">7/23/2024 3:10</text>
<text x="564.62" y="844.2" style="font-size:17.59px" fill="#141414">@</text>
<text x="661.76" y="844.2" style="font-size:17.59px" fill="#141414">M</text>
<text x="848" y="844.2" textLength="33.72" lengthAdjust="spacingAndGlyphs" style="font-size:17.59px" fill="#141414">4.19</text>
<text x="895.58" y="844.2" textLength="43.35" lengthAdjust="spacingAndGlyphs" style="font-size:17.59px" fill="#141414">26.25</text>
<text x="987.41" y="844.2" textLength="9.63" lengthAdjust="spacingAndGlyphs" style="font-size:17.59px" fill="#141414">1</text>
<text x="1011.11" y="844.2" textLength="33.72" lengthAdjust="spacingAndGlyphs" style="font-size:17.59px" fill="#141414">3.45</text>
<text x="227.19" y="870.9" textLength="77.08" lengthAdjust="spacingAndGlyphs" style="font-size:17.59px" fill="#141414">21000107</text>
<text x="325.96" y="870.9" textLength="57.81" lengthAdjust="spacingAndGlyphs" style="font-size:17.59px" fill="#141414">108352</text>
<text x="442.28" y="870.9" textLength="115.6" lengthAdjust="spacingAndGlyphs" style="font-size:17.59px" fill="#141414">7/23/2024 3:20</text>
<text x="564.62" y="870.9" style="font-size:17.59px" fill="#141414">@</text>
<text x="661.76" y="870.9" style="font-size:17.59px" fill="#141414">M</text>
<text x="847.94" y="870.9" textLength="33.72" lengthAdjust="spacingAndGlyphs" style="font-size:17.59px" fill="#141414">4.18</text>
<text x="919.69" y="870.9" textLength="19.27" lengthAdjust="spacingAndGlyphs" style="font-size:17.59px" fill="#141414">26</text>
<text x="987.24" y="870.9" textLength="9.63" lengthAdjust="spacingAndGlyphs" style="font-size:17.59px" fill="#141414">0</text>
<text x="1011.11" y="870.9" textLength="33.72" lengthAdjust="spacingAndGlyphs" style="font-size:17.59px" fill="#141414">2.85</text>
<text x="227.19" y="897.6" textLength="77.08" lengthAdjust="spacingAndGlyphs" style="font-size:17.59px" fill="#141414">21000107</text>
<text x="325.85" y="897.6" textLength="57.81" lengthAdjust="spacingAndGlyphs" style="font-size:17.59px" fill="#141414">108353</text>
<text x="442.28" y="897.6" textLength="115.6" lengthAdjust="spacingAndGlyphs" style="font-size:17.59px" fill="#141414">7/23/2024 3:30</text>
<text x="564.62" y="897.6" style="font-size:17.59px" fill="#141414">@</text>
<text x="661.76" y="897.6" style="font-size:17.59px" fill="#141414">M</text>
<text x="847.94" y="897.6" textLength="33.72" lengthAdjust="spacingAndGlyphs" style="font-size:17.59px" fill="#141414">4.18</text>
<text x="895.58" y="897.6" textLength="43.35" lengthAdjust="spacingAndGlyphs" style="font-size:17.59px" fill="#141414">24.75</text>
<text x="987.24" y="897.6" textLength="9.63" lengthAdjust="spacingAndGlyphs" style="font-size:17.59px" fill="#141414">0</text>
<text x="1020.78" y="897.6" textLength="24.08" lengthAdjust="spacingAndGlyphs" style="font-size:17.59px" fill="#141414">1.6</text>
<text x="227.19" y="924.3" textLength="77.08" lengthAdjust="spacingAndGlyphs" style="font-size:17.59px" fill="#141414">21000107</text>
<text x="325.6" y="924.3" textLength="57.81" lengthAdjust="spacingAndGlyphs" style="font-size:17.59px" fill="#141414">108354</text>
<text x="442.28" y="924.3" textLength="115.6" lengthAdjust="spacingAndGlyphs" style="font-size:17.59px" fill="#141414">7/23/2024 3:40</text>
<text x="564.62" y="924.3" style="font-size:17.59px" fill="#141414">@</text>
<text x="661.76" y="924.3" style="font-size:17.59px" fill="#141414">M</text>
<text x="847.94" y="924.3" textLength="33.72" lengthAdjust="spacingAndGlyphs" style="font-size:17.59px" fill="#141414">4.18</text>
<text x="905.21" y="924.3" textLength="33.72" lengthAdjust="spacingAndGlyphs" style="font-size:17.59px" fill="#141414">24.5</text>
<text x="987.24" y="924.3" textLength="9.63" lengthAdjust="spacingAndGlyphs" style="font-size:17.59px" fill="#141414">0</text>
<text x="1011.25" y="924.3" textLength="33.72" lengthAdjust="spacingAndGlyphs" style="font-size:17.59px" fill="#141414">0.92</text>
<text x="227.19" y="951" textLength="77.08" lengthAdjust="spacingAndGlyphs" style="font-size:17.59px" fill="#141414">21000107</text>
<text x="325.82" y="951" textLength="57.81" lengthAdjust="spacingAndGlyphs" style="font-size:17.59px" fill="#141414">108355</text>
<text x="442.28" y="951" textLength="115.6" lengthAdjust="spacingAndGlyphs" style="font-size:17.59px" fill="#141414">7/23/2024 3:50</text>
<text x="564.62" y="951" style="font-size:17.59px" fill="#141414">@</text>
<text x="661.76" y="951" style="font-size:17.59px" fill="#141414">M</text>
<text x="847.94" y="951" textLength="33.72" lengthAdjust="spacingAndGlyphs" style="font-size:17.59px" fill="#141414">4.18</text>
<text x="905.21" y="951" textLength="33.72" lengthAdjust="spacingAndGlyphs" style="font-size:17.59px" fill="#141414">24.5</text>
<text x="987.24" y="951" textLength="9.63" lengthAdjust="spacingAndGlyphs" style="font-size:17.59px" fill="#141414">0</text>
<text x="1011.14" y="951" textLength="33.72" lengthAdjust="spacingAndGlyphs" style="font-size:17.59px" fill="#141414">0.16</text>
<rect x="365.6" y="319.9" width="20.8" height="21.2" rx="1" fill="#c3c6c9" stroke="#9da1a5" stroke-width="1"/>
<path d="M372.2 329 L379.8 329 L376 332.8 Z" fill="#4d4d4d"/>
<rect x="539.6" y="319.9" width="20.6" height="21.2" rx="1" fill="#c3c6c9" stroke="#9da1a5" stroke-width="1"/>
<path d="M546.1 329 L553.7 329 L549.9 332.8 Z" fill="#4d4d4d"/>
<rect x="636.7" y="319.9" width="20.2" height="21.2" rx="1" fill="#c3c6c9" stroke="#9da1a5" stroke-width="1"/>
<path d="M643 329 L650.6 329 L646.8 332.8 Z" fill="#4d4d4d"/>
<rect x="752.9" y="319.9" width="21.2" height="21.2" rx="1" fill="#c3c6c9" stroke="#9da1a5" stroke-width="1"/>
<path d="M759.7 329 L767.3 329 L763.5 332.8 Z" fill="#4d4d4d"/>
<rect x="862.9" y="319.9" width="21.2" height="21.2" rx="1" fill="#c3c6c9" stroke="#9da1a5" stroke-width="1"/>
<path d="M869.7 329 L877.3 329 L873.5 332.8 Z" fill="#4d4d4d"/>
<rect x="920.9" y="319.9" width="20.6" height="21.2" rx="1" fill="#c3c6c9" stroke="#9da1a5" stroke-width="1"/>
<path d="M927.4 329 L935 329 L931.2 332.8 Z" fill="#4d4d4d"/>
<rect x="978.4" y="319.9" width="20.6" height="21.2" rx="1" fill="#c3c6c9" stroke="#9da1a5" stroke-width="1"/>
<path d="M984.9 329 L992.5 329 L988.7 332.8 Z" fill="#4d4d4d"/>
<rect x="1026" y="319.9" width="20.7" height="21.2" rx="1" fill="#c3c6c9" stroke="#9da1a5" stroke-width="1"/>
<path d="M1032.55 329 L1040.15 329 L1036.35 332.8 Z" fill="#4d4d4d"/>
<rect x="1075.5" y="319.9" width="20" height="21.2" rx="1" fill="#c3c6c9" stroke="#9da1a5" stroke-width="1"/>
<path d="M1081.7 329 L1089.3 329 L1085.5 332.8 Z" fill="#4d4d4d"/>
<rect x="285.5" y="319.9" width="20.4" height="21.2" rx="1" fill="#f7f7f7" stroke="#c2c9d0" stroke-width="1"/>
<path d="M291.4 324.5 L302.6 324.5 L298.5 329 L298.5 333.5 L295.5 333.5 L295.5 329 Z" fill="#555555"/>
<path d="M288.8 332.2 L294 332.2 L291.4 335.1 Z" fill="#555555"/>
<rect x="64" y="945.5" width="1944" height="43.3" fill="#f0f0f0"/>
<rect x="213.6" y="946.7" width="318.4" height="36.4" rx="6" fill="#ffffff" filter="url(#sh2)"/>
<text x="223.99" y="970.6" textLength="297.57" lengthAdjust="spacingAndGlyphs" style="font-size:20.2px" fill="#262626" stroke="#262626" stroke-width="0.55">10001_100003_Gateway_21000107_3</text>
<rect x="225" y="978" width="297" height="2.2" rx="1" fill="#107c41"/>
<line x1="538.2" y1="954.7" x2="538.2" y2="979.5" stroke="#d0d0d0" stroke-width="1"/>
<rect x="64" y="988.8" width="1944" height="24.2" fill="#f3f3f3"/>
<line x1="64" y1="989.3" x2="2008" y2="989.3" stroke="#ffffff" stroke-width="1"/>
<text x="78.1" y="1008.5" textLength="38.73" lengthAdjust="spacingAndGlyphs" style="font-size:14.1px" fill="#3a3a3a">Ready</text>
<text x="138.17" y="1008.5" textLength="182.45" lengthAdjust="spacingAndGlyphs" style="font-size:14.1px" fill="#3a3a3a">4395 of 50566 records found</text>
<text x="412.97" y="1008.5" textLength="151.63" lengthAdjust="spacingAndGlyphs" style="font-size:14.1px" fill="#3a3a3a">Accessibility: Unavailable</text>
<text x="1058.57" y="1008.5" textLength="136.5" lengthAdjust="spacingAndGlyphs" style="font-size:14.1px" fill="#3a3a3a">Average: 3022323.427</text>
<text x="1217.51" y="1008.5" textLength="81.45" lengthAdjust="spacingAndGlyphs" style="font-size:14.1px" fill="#3a3a3a">Count: 39561</text>
<text x="1318.29" y="1008.5" textLength="116.66" lengthAdjust="spacingAndGlyphs" style="font-size:14.1px" fill="#3a3a3a">Sum: 92981780231</text>
<text x="1483.87" y="1008.5" textLength="98.63" lengthAdjust="spacingAndGlyphs" style="font-size:14.1px" fill="#3a3a3a">Display Settings</text>
<text x="1961" y="1008.5" textLength="33.46" lengthAdjust="spacingAndGlyphs" style="font-size:14.1px" fill="#3a3a3a">100%</text>
<rect x="1608.4" y="990" width="53.3" height="23" fill="#e6e6e6"/>
<rect x="1263.2" y="954.6" width="732.4" height="23.2" rx="11.6" fill="#f8f8f8"/>
<rect x="1286" y="961.4" width="677.8" height="10.8" rx="5.4" fill="#6f6f6f"/>
<path d="M1279 961.5 L1279 972.5 L1270.5 967 Z" fill="#6f6f6f"/>
<path d="M1980.6 961.5 L1980.6 972.5 L1989.8 967 Z" fill="#6f6f6f"/>
<rect x="1995.8" y="291" width="24.2" height="655" rx="8" fill="#f5f5f5"/>
<path d="M2001 307 L2012 307 L2006.5 298.3 Z" fill="#6f6f6f"/>
<rect x="2001.6" y="313.8" width="18.4" height="22.2" rx="5" fill="#6f6f6f"/>
<path d="M2001 933 L2012 933 L2006.5 942.5 Z" fill="#6f6f6f"/>
</g>
<rect x="1028.9" y="288.2" width="357.9" height="72.6" rx="5" fill="#ffffff" stroke="#878787" stroke-width="1.3" filter="url(#sh)"/>
<rect x="1035.9" y="293.3" width="75.1" height="30.5" rx="5" fill="#ffffff" stroke="#9a9a9a" stroke-width="1"/>
<rect x="1114.8" y="293.3" width="54.3" height="30.5" rx="5" fill="#ffffff" stroke="#9a9a9a" stroke-width="1"/>
<text x="1038.27" y="313.7" textLength="55.73" lengthAdjust="spacingAndGlyphs" style="font-size:14.24px" fill="#333333">Aptos Na</text>
<text x="1116.8" y="313.7" textLength="14.53" lengthAdjust="spacingAndGlyphs" style="font-size:14.24px" fill="#333333">11</text>
<rect x="1028.9" y="383.2" width="296.3" height="522.2" rx="4.5" fill="#ffffff" stroke="#878787" stroke-width="1.3" filter="url(#sh)"/>
<rect x="1035.9" y="390.8" width="281.6" height="30.3" fill="#ffffff" stroke="#8c8c8c" stroke-width="1"/>
<text x="1043.38" y="407.8" textLength="110.51" lengthAdjust="spacingAndGlyphs" style="font-size:13.95px" fill="#8a8a8a">Search the menus</text>
<rect x="1036" y="462" width="286" height="36" fill="#f5f5f5"/>
<text x="1077.58" y="451.2" textLength="22.02" lengthAdjust="spacingAndGlyphs" style="font-size:15.99px" fill="#262626">Cut</text>
<text x="1077.51" y="490.8" textLength="36.53" lengthAdjust="spacingAndGlyphs" style="font-size:15.99px" fill="#262626">Copy</text>
<text x="1077.07" y="614.7" textLength="104.3" lengthAdjust="spacingAndGlyphs" style="font-size:15.99px" fill="#262626">Paste Special...</text>
<text x="1076.83" y="657" textLength="39.78" lengthAdjust="spacingAndGlyphs" style="font-size:15.99px" fill="#262626">Insert</text>
<text x="1076.93" y="695.2" textLength="48.31" lengthAdjust="spacingAndGlyphs" style="font-size:15.99px" fill="#262626">Delete</text>
<text x="1077.51" y="733.7" textLength="103.35" lengthAdjust="spacingAndGlyphs" style="font-size:15.99px" fill="#262626">Clear Contents</text>
<text x="1077.05" y="775.4" textLength="99.35" lengthAdjust="spacingAndGlyphs" style="font-size:15.99px" fill="#262626">Format Cells...</text>
<text x="1077" y="813.3" textLength="94.94" lengthAdjust="spacingAndGlyphs" style="font-size:15.99px" fill="#262626">Row Height...</text>
<text x="1076.87" y="851.5" textLength="35.91" lengthAdjust="spacingAndGlyphs" style="font-size:15.99px" fill="#262626">Hide</text>
<text x="1077.05" y="890.5" textLength="51.16" lengthAdjust="spacingAndGlyphs" style="font-size:15.99px" fill="#262626">Unhide</text>
<text x="1078.66" y="531" textLength="109.33" lengthAdjust="spacingAndGlyphs" style="font-size:15.99px;font-weight:bold" fill="#1a1a1a">Paste Options:</text>
<line x1="1072.6" y1="630.7" x2="1322.8" y2="630.7" stroke="#d6d6d6" stroke-width="1"/>
<line x1="1072.6" y1="748.8" x2="1322.8" y2="748.8" stroke="#d6d6d6" stroke-width="1"/>
<path d="M190.8 214.6 L197.3 221.1 L203.8 214.6" fill="none" stroke="#333333" stroke-width="1.5" stroke-linecap="round" stroke-linejoin="round"/>
<rect x="222.4" y="209" width="2.4" height="2.4" fill="#444444"/>
<rect x="222.4" y="215.1" width="2.4" height="2.4" fill="#444444"/>
<rect x="222.4" y="221.2" width="2.4" height="2.4" fill="#444444"/>
<path d="M246 208.4 L261 223 M261 208.4 L246 223" fill="none" stroke="#a8a8a8" stroke-width="1.4"/>
<path d="M275 215.8 L281.5 222.6 L295.5 208.4" fill="none" stroke="#a8a8a8" stroke-width="1.4"/>
<text x="308.2" y="222.4" textLength="19.19" lengthAdjust="spacingAndGlyphs" style="font-size:22.14px;font-family:'Liberation Serif',serif;font-style:italic" fill="#333333" stroke="#333" stroke-width="0.4">fx</text>
<path d="M334.8 214.6 L341.1 221.1 L347.4 214.6" fill="none" stroke="#9a9a9a" stroke-width="1.3" stroke-linecap="round" stroke-linejoin="round"/>
<path d="M1991.4 217 L1997.6 210.6 L2003.8 217" fill="none" stroke="#444444" stroke-width="1.6"/>
<path d="M90 301 L90 307 L84 307 Z" fill="#1d6b40"/>
<path d="M1100.2 306.9 L1103.9 311.2 L1107.6 306.9" fill="none" stroke="#333333" stroke-width="1.3" stroke-linecap="round" stroke-linejoin="round"/>
<path d="M1157.8 306.9 L1161.4 311.2 L1165 306.9" fill="none" stroke="#333333" stroke-width="1.3" stroke-linecap="round" stroke-linejoin="round"/>
<text x="1177.46" y="315" textLength="14.28" lengthAdjust="spacingAndGlyphs" style="font-size:24.27px" fill="#3c3c3c">A</text>
<path d="M1191.6 303.2 L1194.5 299.4 L1197.4 303.2" fill="none" stroke="#3b97de" stroke-width="1.5" stroke-linecap="round" stroke-linejoin="round"/>
<text x="1211.57" y="315.4" textLength="11.67" lengthAdjust="spacingAndGlyphs" style="font-size:19.48px" fill="#3c3c3c">A</text>
<path d="M1223.2 299.6 L1226.3 303.4 L1229.4 299.6" fill="none" stroke="#3b97de" stroke-width="1.5" stroke-linecap="round" stroke-linejoin="round"/>
<text x="1245.1" y="316.3" textLength="10.3" lengthAdjust="spacingAndGlyphs" style="font-size:23.84px" fill="#3c3c3c">$</text>
<path d="M1270.6 306.9 L1274.45 311.3 L1278.3 306.9" fill="none" stroke="#333333" stroke-width="1.3" stroke-linecap="round" stroke-linejoin="round"/>
<text x="1292.45" y="317.8" textLength="21.31" lengthAdjust="spacingAndGlyphs" style="font-size:26.74px" fill="#3c3c3c">%</text>
<path d="M1336 301 Q1341 301 1340.7 306.6 Q1340.2 313.6 1332 316.5 L1331.4 315.2 Q1335.6 312.6 1336.2 309.2 Q1331.2 309.4 1331.4 305.2 Q1331.6 301 1336 301 Z" fill="#333333"/>
<rect x="1357.4" y="298.9" width="18.8" height="18.2" fill="#ffffff" stroke="#555" stroke-width="1.5"/>
<rect x="1357.4" y="302.6" width="18.8" height="10.8" fill="#dcecfa" stroke="#3b97de" stroke-width="1.6"/>
<line x1="1366.8" y1="298.9" x2="1366.8" y2="317.1" stroke="#555" stroke-width="1"/>
<line x1="1360.6" y1="308" x2="1373" y2="308" stroke="#3b97de" stroke-width="1.5"/>
<path d="M1363 305.4 L1360.4 308 L1363 310.6 M1370.6 305.4 L1373.2 308 L1370.6 310.6" fill="none" stroke="#3b97de" stroke-width="1.5"/>
<text x="1044.74" y="346" textLength="11.49" lengthAdjust="spacingAndGlyphs" style="font-size:19.33px;font-weight:bold" fill="#333333">B</text>
<text x="1078.08" y="346" textLength="7.09" lengthAdjust="spacingAndGlyphs" style="font-size:20.31px;font-family:'Liberation Serif',serif;font-style:italic" fill="#333333">I</text>
<line x1="1105" y1="331.9" x2="1123.6" y2="331.9" stroke="#555555" stroke-width="1.5"/>
<line x1="1108" y1="337.2" x2="1120.6" y2="337.2" stroke="#555555" stroke-width="1.5"/>
<line x1="1105" y1="342.5" x2="1123.6" y2="342.5" stroke="#555555" stroke-width="1.5"/>
<line x1="1107.5" y1="348" x2="1121" y2="348" stroke="#555555" stroke-width="1.5"/>
<path d="M1139.6 337.5 L1146.3 330.8 L1153 337.5 L1146.3 344.2 Z" fill="none" stroke="#444" stroke-width="1.5" stroke-linejoin="round"/>
<path d="M1146.2 330.8 L1146.2 333.6" fill="none" stroke="#444" stroke-width="1.5"/>
<path d="M1151.8 334 Q1155.6 335 1154.4 340" fill="none" stroke="#3b97de" stroke-width="1.8"/>
<rect x="1135.8" y="346" width="21" height="4.9" fill="#ffff00"/>
<path d="M1166 339.2 L1170 343.4 L1174 339.2" fill="none" stroke="#333333" stroke-width="1.3" stroke-linecap="round" stroke-linejoin="round"/>
<text x="1192.66" y="344.3" textLength="11.97" lengthAdjust="spacingAndGlyphs" style="font-size:20.2px" fill="#3c3c3c">A</text>
<rect x="1187.9" y="346" width="21.3" height="5" fill="#ff0000"/>
<path d="M1218.5 339.2 L1222.4 343.4 L1226.3 339.2" fill="none" stroke="#333333" stroke-width="1.3" stroke-linecap="round" stroke-linejoin="round"/>
<rect x="1240.9" y="330.6" width="19.3" height="18.8" fill="#fafafa" stroke="#777" stroke-width="1" stroke-dasharray="1.4 1.2"/>
<line x1="1250.5" y1="330.6" x2="1250.5" y2="349.4" stroke="#777" stroke-width="1" stroke-dasharray="1.4 1.2"/>
<line x1="1240.9" y1="340" x2="1260.2" y2="340" stroke="#777" stroke-width="1" stroke-dasharray="1.4 1.2"/>
<line x1="1240.6" y1="349.6" x2="1260.6" y2="349.6" stroke="#444" stroke-width="1.8"/>
<path d="M1270.6 339.2 L1274.45 343.4 L1278.3 339.2" fill="none" stroke="#333333" stroke-width="1.3" stroke-linecap="round" stroke-linejoin="round"/>
<text x="1306.09" y="338.4" textLength="7.33" lengthAdjust="spacingAndGlyphs" style="font-size:11.92px" fill="#555555">0</text>
<text x="1294.78" y="349.8" textLength="18.65" lengthAdjust="spacingAndGlyphs" style="font-size:11.92px" fill="#555555">.00</text>
<line x1="1293" y1="335" x2="1304" y2="335" stroke="#3b97de" stroke-width="1.5"/>
<path d="M1296.6 331.4 L1293 335 L1296.6 338.6" fill="none" stroke="#3b97de" stroke-width="1.5"/>
<text x="1326.56" y="338.4" textLength="18.87" lengthAdjust="spacingAndGlyphs" style="font-size:11.92px" fill="#555555">.00</text>
<text x="1334.39" y="349.8" textLength="11.02" lengthAdjust="spacingAndGlyphs" style="font-size:11.92px" fill="#555555">.0</text>
<line x1="1324.5" y1="345" x2="1336" y2="345" stroke="#3b97de" stroke-width="1.5"/>
<path d="M1332.4 341.4 L1336 345 L1332.4 348.6" fill="none" stroke="#3b97de" stroke-width="1.5"/>
<path d="M1357.6 338.6 L1369.2 350 L1373 343.2 L1364.8 335 Z" fill="#fbe3c8" stroke="#e8862a" stroke-width="1.6" stroke-linejoin="round"/>
<path d="M1364 342 L1366.2 346" fill="none" stroke="#e8862a" stroke-width="1"/>
<path d="M1368.2 338.6 L1376.4 330.8 Q1378 330.2 1377.6 332 L1371 340.8" fill="#ffffff" stroke="#444" stroke-width="1.6" stroke-linejoin="round"/>
<path d="M1051.6 434.2 L1058.6 448.6 M1059.4 434.2 L1052.4 448.6" fill="none" stroke="#555" stroke-width="1.3"/>
<circle cx="1052.2" cy="451.6" r="2.4" fill="none" stroke="#3b97de" stroke-width="1.4"/>
<circle cx="1058.8" cy="451.6" r="2.4" fill="none" stroke="#3b97de" stroke-width="1.4"/>
<path d="M1053.4 490 L1046 490 L1046 472.8 L1054.2 472.8 L1055.5 476" fill="none" stroke="#444" stroke-width="1.5"/>
<path d="M1053.8 476.6 L1060.8 476.6 L1065.1 480.9 L1065.1 491.8 L1053.8 491.8 Z" fill="#ffffff" stroke="#444" stroke-width="1.5" stroke-linejoin="round"/>
<path d="M1060.8 476.6 L1060.8 480.9 L1065.1 480.9" fill="none" stroke="#444" stroke-width="1.2"/>
<line x1="1057" y1="486.2" x2="1062" y2="486.2" stroke="#666" stroke-width="1"/>
<line x1="1057" y1="488.8" x2="1062" y2="488.8" stroke="#666" stroke-width="1"/>
<path d="M1053.5 512.6 L1048.3 512.6 L1048.3 530 L1056.3 530" fill="none" stroke="#e8862a" stroke-width="1.8"/>
<path d="M1057.4 512.6 L1062.6 512.6 L1062.6 518.6" fill="none" stroke="#e8862a" stroke-width="1.8"/>
<path d="M1051.2 515.8 L1051.2 512.8 L1053 512.8 Q1053 508.8 1055.4 508.8 Q1057.8 508.8 1057.8 512.8 L1059.6 512.8 L1059.6 515.8 Z" fill="#f4f4f4" stroke="#7a7a7a" stroke-width="1.5"/>
<rect x="1057.6" y="519.8" width="7.8" height="10.4" rx="1" fill="#fafafa" stroke="#555" stroke-width="1.7"/>
<path d="M1088.4 556.8 L1083.2 556.8 L1083.2 577 L1091.2 577" fill="none" stroke="#e8862a" stroke-width="1.8"/>
<path d="M1095 556.8 L1100.2 556.8 L1100.2 562.8" fill="none" stroke="#e8862a" stroke-width="1.8"/>
<path d="M1086.8 561.8 L1086.8 558.8 L1089.3 558.8 Q1089.3 554.3 1091.7 554.3 Q1094.1 554.3 1094.1 558.8 L1096.6 558.8 L1096.6 561.8 Z" fill="#f4f4f4" stroke="#7a7a7a" stroke-width="1.5"/>
<rect x="1093.8" y="563.6" width="10.2" height="14.4" rx="1" fill="#fafafa" stroke="#555" stroke-width="1.7"/>
<path d="M1127.6 556 L1122.4 556 L1122.4 580 L1130.4 580" fill="none" stroke="#e8862a" stroke-width="1.8"/>
<path d="M1137 556 L1142.2 556 L1142.2 562" fill="none" stroke="#e8862a" stroke-width="1.8"/>
<path d="M1126 559.8 L1126 556.8 L1130.05 556.8 Q1130.05 551.1 1132.45 551.1 Q1134.85 551.1 1134.85 556.8 L1138.9 556.8 L1138.9 559.8 Z" fill="#f4f4f4" stroke="#7a7a7a" stroke-width="1.5"/>
<rect x="1128.1" y="564.1" width="19" height="16.5" fill="#fafafa" stroke="#3a3a3a" stroke-width="1.7"/>
<line x1="1128.1" y1="568.1" x2="1147.1" y2="568.1" stroke="#666" stroke-width="0.9"/>
<line x1="1128.1" y1="577.1" x2="1147.1" y2="577.1" stroke="#666" stroke-width="0.9"/>
<line x1="1131.6" y1="564.1" x2="1131.6" y2="580.6" stroke="#666" stroke-width="0.9"/>
<line x1="1143.3" y1="564.1" x2="1143.3" y2="580.6" stroke="#666" stroke-width="0.9"/>
<rect x="1132.1" y="568.6" width="10.7" height="8" fill="#ffffff" stroke="#333" stroke-width="1.4"/>
<path d="M1132.7 576 L1132.7 573.1 L1135.6 570.4 L1139.6 573.6 L1140.8 571.4 L1142.2 576 Z" fill="#5ba8e6" stroke="#1f6fc0" stroke-width="0.6"/>
<circle cx="1140.8" cy="570.2" r="0.9" fill="#e8862a"/>
<rect x="1048" y="757.9" width="15" height="19.3" fill="#ffffff" stroke="#555" stroke-width="1.3"/>
<rect x="1051" y="761.4" width="3" height="3" fill="#999"/>
<rect x="1051" y="767.6" width="3" height="3" fill="#999"/>
<line x1="1055.5" y1="762.9" x2="1059.5" y2="762.9" stroke="#999" stroke-width="1"/>
<line x1="1055.5" y1="769.1" x2="1059.5" y2="769.1" stroke="#999" stroke-width="1"/>
<line x1="1078.4" y1="493.6" x2="1088.6" y2="493.6" stroke="#333333" stroke-width="1"/>
<line x1="1119.2" y1="617.4" x2="1127.6" y2="617.4" stroke="#333333" stroke-width="1"/>
<line x1="1078.4" y1="659.6" x2="1081" y2="659.6" stroke="#333333" stroke-width="1"/>
<line x1="1078.4" y1="697.8" x2="1089.6" y2="697.8" stroke="#333333" stroke-width="1"/>
<line x1="1141.5" y1="736.3" x2="1149.6" y2="736.3" stroke="#333333" stroke-width="1"/>
<line x1="1078.4" y1="778" x2="1086.8" y2="778" stroke="#333333" stroke-width="1"/>
<line x1="1078.4" y1="815.9" x2="1088.4" y2="815.9" stroke="#333333" stroke-width="1"/>
<line x1="1078.4" y1="854.1" x2="1089.2" y2="854.1" stroke="#333333" stroke-width="1"/>
<line x1="1078.4" y1="893.1" x2="1088.8" y2="893.1" stroke="#333333" stroke-width="1"/>
<path d="M105.6 960.4 L98.4 966.4 L105.6 972.4" fill="none" stroke="#9a9a9a" stroke-width="1.4"/>
<path d="M141.4 960.4 L148.6 966.4 L141.4 972.4" fill="none" stroke="#9a9a9a" stroke-width="1.4"/>
<line x1="594.4" y1="966" x2="609.2" y2="966" stroke="#444" stroke-width="1.5"/>
<line x1="601.8" y1="958.6" x2="601.8" y2="973.4" stroke="#444" stroke-width="1.5"/>
<rect x="1241.2" y="961.1" width="2.2" height="2.2" fill="#444"/>
<rect x="1241.2" y="966.5" width="2.2" height="2.2" fill="#444"/>
<rect x="1241.2" y="971.9" width="2.2" height="2.2" fill="#444"/>
<rect x="347.5" y="996.4" width="17.6" height="14.4" fill="#fafafa" stroke="#555" stroke-width="1.4"/>
<rect x="347.5" y="996.4" width="17.6" height="2.4" fill="#555"/>
<line x1="349.4" y1="1001.6" x2="352" y2="1001.6" stroke="#777" stroke-width="1.1"/>
<line x1="349.4" y1="1004.6" x2="352" y2="1004.6" stroke="#777" stroke-width="1.1"/>
<line x1="349.4" y1="1007.6" x2="352" y2="1007.6" stroke="#777" stroke-width="1.1"/>
<circle cx="359.3" cy="1006.6" r="5.6" fill="#ffffff" stroke="#333" stroke-width="1.4"/>
<circle cx="359.3" cy="1006.6" r="2.2" fill="#222"/>
<circle cx="397.8" cy="996.6" r="2" fill="none" stroke="#333" stroke-width="1.3"/>
<path d="M390 998.6 Q393 1001.4 395.6 999.8 L400 999.8 Q403 1001.4 404.8 998.6 M395.4 1000 L393.6 1011.6 M400 1000 L402 1006" fill="none" stroke="#333" stroke-width="1.5" stroke-linecap="round"/>
<path d="M397.6 1006 L395.4 1011.8" fill="none" stroke="#333" stroke-width="1.3"/>
<path d="M402.2 1003.8 Q402.6 1001.6 405 1001.6 Q407.6 1001.8 407.4 1004.2 Q407.2 1006 405 1007 L405 1009" fill="none" stroke="#333" stroke-width="1.3"/>
<circle cx="405" cy="1011.2" r="0.8" fill="#333"/>
<path d="M1470 1007.3 L1462.9 1007.3 L1462.9 996.2 L1480.4 996.2 L1480.4 1002" fill="none" stroke="#555" stroke-width="1.4"/>
<path d="M1480.4 1006.9 L1478.29 1008.8 L1477.7 1011.58 L1475 1010.7 L1472.3 1011.58 L1471.71 1008.8 L1469.6 1006.9 L1471.71 1005 L1472.3 1002.22 L1475 1003.1 L1477.7 1002.22 L1478.29 1005 Z" fill="#f3f3f3" stroke="#222" stroke-width="1.2"/>
<circle cx="1475" cy="1006.9" r="1.5" fill="#222"/>
<rect x="1626.2" y="995" width="16.6" height="15.6" fill="none" stroke="#333" stroke-width="1.4"/>
<line x1="1631.73" y1="995" x2="1631.73" y2="1010.6" stroke="#333" stroke-width="1.2"/>
<line x1="1626.2" y1="1000.2" x2="1642.8" y2="1000.2" stroke="#333" stroke-width="1.2"/>
<line x1="1637.27" y1="995" x2="1637.27" y2="1010.6" stroke="#333" stroke-width="1.2"/>
<line x1="1626.2" y1="1005.4" x2="1642.8" y2="1005.4" stroke="#333" stroke-width="1.2"/>
<rect x="1679.8" y="994.8" width="17.8" height="16.2" rx="1" fill="none" stroke="#333" stroke-width="1.5"/>
<rect x="1683" y="998" width="11.4" height="9.8" fill="none" stroke="#333" stroke-width="1.2"/>
<line x1="1685" y1="1000.6" x2="1692.4" y2="1000.6" stroke="#555" stroke-width="0.9"/>
<line x1="1685" y1="1002.9" x2="1692.4" y2="1002.9" stroke="#555" stroke-width="0.9"/>
<line x1="1685" y1="1005.2" x2="1692.4" y2="1005.2" stroke="#555" stroke-width="0.9"/>
<rect x="1733.2" y="994.8" width="17.8" height="16.2" fill="none" stroke="#333" stroke-width="1.5"/>
<path d="M1737.4 994.8 L1737.4 1003.6 L1746 1003.6 L1746 994.8 M1741.6 994.8 L1741.6 1000" fill="none" stroke="#333" stroke-width="1.3"/>
<line x1="1776.4" y1="1003.3" x2="1786.4" y2="1003.3" stroke="#555" stroke-width="1.3"/>
<line x1="1793.4" y1="1003.7" x2="1926.5" y2="1003.7" stroke="#777" stroke-width="1"/>
<rect x="1857.4" y="996" width="6.2" height="15" rx="0.8" fill="#666"/>
<line x1="1932.8" y1="1003.3" x2="1943.6" y2="1003.3" stroke="#555" stroke-width="1.3"/>
<line x1="1938.2" y1="997.9" x2="1938.2" y2="1008.7" stroke="#555" stroke-width="1.3"/>
<path d="M1030 453.3 h298 a3 3 0 0 1 3 3 v47.3 a3 3 0 0 1 -3 3 h-298 a3 3 0 0 1 -3 -3 v-47.3 a3 3 0 0 1 3 -3 Z M1035.6 461.9 h286.8 v36.1 h-286.8 Z" fill="#ff0000" fill-rule="evenodd"/>
<path d="M62.9 279 h33.1 a3 3 0 0 1 3 3 v31 a3 3 0 0 1 -3 3 h-33.1 a3 3 0 0 1 -3 -3 v-31 a3 3 0 0 1 3 -3 Z M69.1 288.2 h20.7 v18.6 h-20.7 Z" fill="#ff0000" fill-rule="evenodd"/>
<path d="M579.8 944.1 h38.2 a3 3 0 0 1 3 3 v35.6 a3 3 0 0 1 -3 3 h-38.2 a3 3 0 0 1 -3 -3 v-35.6 a3 3 0 0 1 3 -3 Z M586 953.3 h25.8 v23.2 h-25.8 Z" fill="#ff0000" fill-rule="evenodd"/>
<path d="M21.6 283 L26 283 L26 317.9 L21.1 317.9 L21.1 290.6 Q17.6 293.6 12.7 294.6 L12.7 289.4 Q18.6 287.4 21.6 283 Z" fill="#ff0000"/>
<rect x="39" y="313" width="5" height="4.9" fill="#ff0000"/>
<text x="1256.39" y="556.6" textLength="43.36" lengthAdjust="spacingAndGlyphs" style="font-size:50.29px" fill="#ff0000">2.</text>
<text x="633.47" y="982.7" textLength="42.26" lengthAdjust="spacingAndGlyphs" style="font-size:51.31px" fill="#ff0000">3.</text>
</svg></body></html>
